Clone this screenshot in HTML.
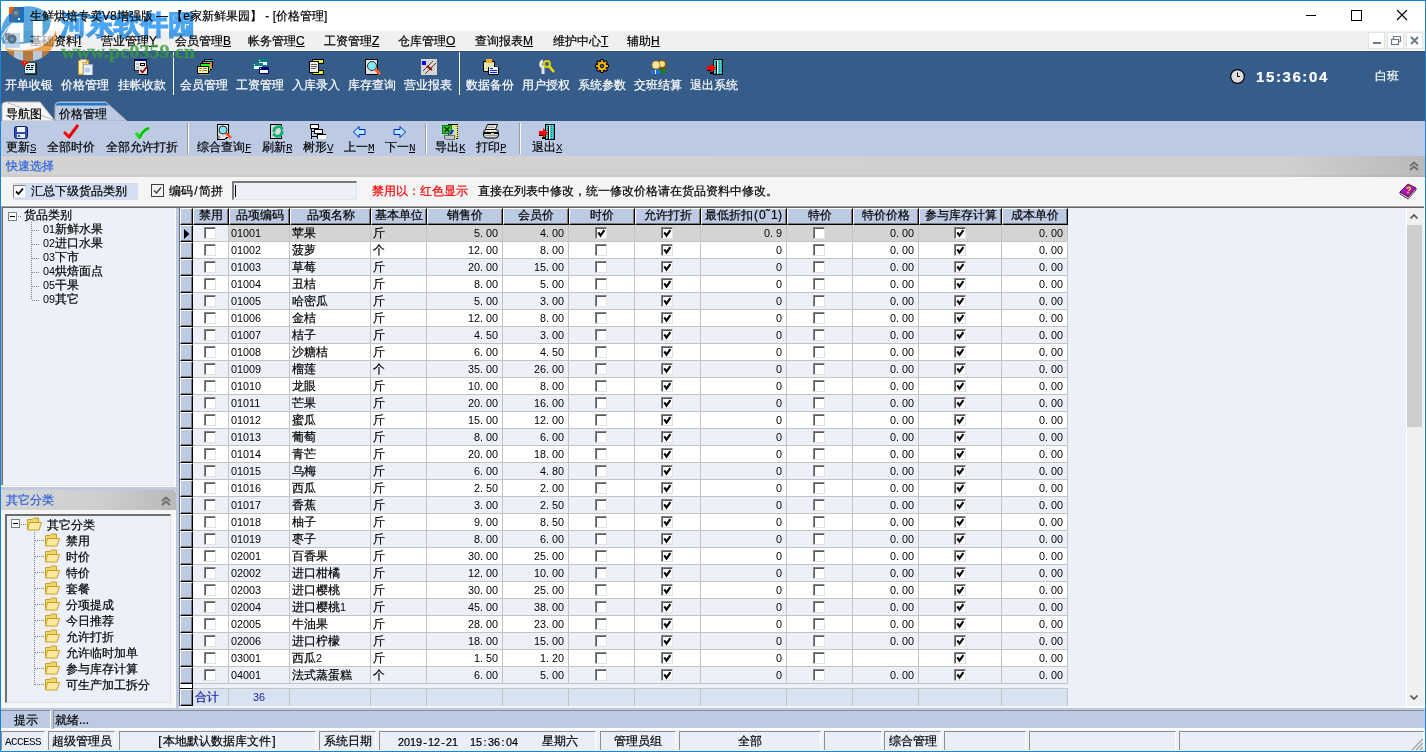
<!DOCTYPE html><html><head><meta charset="utf-8"><style>
*{margin:0;padding:0;box-sizing:border-box}
html,body{width:1426px;height:752px;overflow:hidden;background:#fff}
body{position:relative;font-family:"Liberation Sans",sans-serif;font-size:12px;color:#000}
div{position:absolute}
.t{position:absolute;white-space:nowrap;line-height:12px;font-size:12px}
.m{font-size:10.8px;-webkit-text-stroke:0 !important}
.d{display:inline-block;width:6px;text-align:left}
.t{-webkit-text-stroke:0.2px currentColor}
.u{font-family:"Liberation Mono",monospace;letter-spacing:-0.6px;font-size:11px;-webkit-text-stroke:0}
u{text-decoration:underline;text-underline-offset:1px;text-decoration-thickness:1px}
</style></head><body>
<div style="position:absolute;left:0px;top:0px;width:1426px;height:31px;background:#fff"></div>
<div class="t" style="left:30px;top:10px;">生鲜烘焙专卖V8增强版 — 【e家新鲜果园】 - [价格管理]</div>
<div style="position:absolute;left:1306px;top:15px;width:10px;height:1px;background:#000"></div>
<div style="position:absolute;left:1351px;top:10px;width:11px;height:11px;border:1px solid #000"></div>
<svg style="position:absolute;left:1396px;top:9px" width="12" height="12"><path d="M1 1L11 11M11 1L1 11" stroke="#000" stroke-width="1.1"/></svg>
<div style="position:absolute;left:0px;top:31px;width:1426px;height:19px;background:#f0f0f0"></div>
<div style="position:absolute;left:0px;top:50px;width:1426px;height:1px;background:#fdfdfd"></div>
<div class="t" style="left:30px;top:35px;">基础资料<u>I</u></div>
<div class="t" style="left:101px;top:35px;">营业管理<u>Y</u></div>
<div class="t" style="left:175px;top:35px;">会员管理<u>B</u></div>
<div class="t" style="left:248px;top:35px;">帐务管理<u>C</u></div>
<div class="t" style="left:324px;top:35px;">工资管理<u>Z</u></div>
<div class="t" style="left:398px;top:35px;">仓库管理<u>O</u></div>
<div class="t" style="left:475px;top:35px;">查询报表<u>M</u></div>
<div class="t" style="left:553px;top:35px;">维护中心<u>T</u></div>
<div class="t" style="left:627px;top:35px;">辅助<u>H</u></div>
<div style="position:absolute;left:1368px;top:32px;width:17px;height:17px;background:#fff;border:1px solid #e3e3e3"></div>
<div style="position:absolute;left:1387px;top:32px;width:17px;height:17px;background:#fff;border:1px solid #e3e3e3"></div>
<div style="position:absolute;left:1406px;top:32px;width:17px;height:17px;background:#fff;border:1px solid #e3e3e3"></div>
<div style="position:absolute;left:1373px;top:42px;width:8px;height:2px;background:#6b7b8c"></div>
<svg style="position:absolute;left:1387px;top:32px" width="17" height="17"><rect x="4.5" y="7.5" width="7" height="5" fill="none" stroke="#6b7b8c" stroke-width="1.2"/><path d="M6.5 7.5V4.5H13.5V9.5H11.5" fill="none" stroke="#6b7b8c" stroke-width="1.2"/></svg>
<svg style="position:absolute;left:1406px;top:32px" width="17" height="17"><path d="M5 5L12 12M12 5L5 12" stroke="#6b7b8c" stroke-width="2"/></svg>
<div style="position:absolute;left:0px;top:51px;width:1426px;height:70px;background:#365d8a"></div>
<div style="position:absolute;left:0px;top:51px;width:1426px;height:1px;background:#2a4f7c"></div>
<div class="t" style="left:5px;top:79px;color:#fff">开单收银</div>
<div class="t" style="left:61px;top:79px;color:#fff">价格管理</div>
<div class="t" style="left:118px;top:79px;color:#fff">挂帐收款</div>
<div class="t" style="left:180px;top:79px;color:#fff">会员管理</div>
<div class="t" style="left:236px;top:79px;color:#fff">工资管理</div>
<div class="t" style="left:292px;top:79px;color:#fff">入库录入</div>
<div class="t" style="left:348px;top:79px;color:#fff">库存查询</div>
<div class="t" style="left:404px;top:79px;color:#fff">营业报表</div>
<div class="t" style="left:466px;top:79px;color:#fff">数据备份</div>
<div class="t" style="left:522px;top:79px;color:#fff">用户授权</div>
<div class="t" style="left:578px;top:79px;color:#fff">系统参数</div>
<div class="t" style="left:634px;top:79px;color:#fff">交班结算</div>
<div class="t" style="left:690px;top:79px;color:#fff">退出系统</div>
<div style="position:absolute;left:173px;top:52px;width:1px;height:43px;background:#f4f6f8"></div>
<div style="position:absolute;left:459px;top:52px;width:1px;height:43px;background:#f4f6f8"></div>
<svg style="position:absolute;left:21px;top:59px" width="16" height="16" shape-rendering="crispEdges"><rect x="4" y="4" width="12" height="12" fill="#202020"/><rect x="3" y="3" width="11" height="11" fill="#c8f4f8" stroke="#404040" stroke-width="1"/><rect x="6" y="6" width="3" height="1" fill="#000"/><rect x="10" y="6" width="3" height="1" fill="#000"/><rect x="5" y="8" width="4" height="1" fill="#000"/><rect x="10" y="8" width="2" height="1" fill="#000"/><rect x="5" y="10" width="2" height="1" fill="#000"/><rect x="8" y="10" width="4" height="1" fill="#000"/><rect x="0" y="2" width="7" height="3" fill="#d02010"/><rect x="2" y="0" width="3" height="7" fill="#d02010"/><rect x="3" y="3" width="1" height="1" fill="#ffb0b0"/></svg>
<svg style="position:absolute;left:78px;top:59px" width="16" height="16" shape-rendering="crispEdges"><rect x="0" y="1" width="10" height="14" fill="#f8d070" stroke="#e09010" stroke-width="1"/><rect x="2" y="0" width="6" height="3" fill="#f0f0f0" stroke="#c0a060" stroke-width="1"/><rect x="1" y="2" width="3" height="12" fill="#fff8c0"/><rect x="5" y="5" width="9" height="11" fill="#e8eefa" stroke="#a0a8c8" stroke-width="1"/><rect x="7" y="9" width="5" height="4" fill="#b8d0f0"/></svg>
<svg style="position:absolute;left:134px;top:59px" width="16" height="16" shape-rendering="crispEdges"><rect x="0" y="0" width="13" height="12" fill="#101010"/><rect x="1" y="0" width="12" height="2" fill="#000080"/><rect x="1" y="2" width="11" height="9" fill="#f4f4f4"/><rect x="2" y="4" width="3" height="2" fill="#c0c0c0"/><rect x="6" y="4" width="5" height="3" fill="#000"/><rect x="7" y="5" width="3" height="1" fill="#fff"/><rect x="2" y="7" width="3" height="3" fill="#c0c0c0"/><rect x="5" y="8" width="9" height="8" fill="#000"/><rect x="5" y="7" width="8" height="8" fill="#e0e0e0"/><path d="M6.5 11L8.5 13.5L13.5 7" stroke="#900000" stroke-width="1.6" fill="none" shape-rendering="auto"/></svg>
<svg style="position:absolute;left:197px;top:59px" width="16" height="16" shape-rendering="crispEdges"><rect x="7" y="0" width="9" height="9" fill="#000"/><rect x="8" y="1" width="8" height="1" fill="#00e0f0"/><rect x="5" y="2" width="10" height="9" fill="#000"/><rect x="6" y="3" width="9" height="7" fill="#ff8040"/><rect x="3" y="4" width="10" height="9" fill="#000"/><rect x="4" y="5" width="9" height="7" fill="#20ff20"/><rect x="0" y="7" width="12" height="8" fill="#000"/><rect x="1" y="8" width="10" height="6" fill="#fff8a0"/><rect x="2" y="9" width="3" height="1" fill="#808080"/><rect x="6" y="9" width="4" height="1" fill="#808080"/><rect x="2" y="11" width="2" height="1" fill="#808080"/><rect x="5" y="11" width="5" height="1" fill="#808080"/><rect x="2" y="15" width="11" height="1" fill="#908880"/></svg>
<svg style="position:absolute;left:253px;top:59px" width="16" height="16" shape-rendering="crispEdges"><rect x="5" y="0" width="10" height="7" fill="#008080"/><rect x="6" y="3" width="8" height="3" fill="#fff"/><rect x="6" y="1" width="1" height="1" fill="#fff"/><rect x="0" y="4" width="10" height="7" fill="#008080"/><rect x="1" y="7" width="8" height="3" fill="#fff"/><rect x="1" y="5" width="1" height="1" fill="#fff"/><rect x="6" y="8" width="10" height="7" fill="#000080"/><rect x="7" y="11" width="8" height="3" fill="#fff"/><rect x="7" y="9" width="1" height="1" fill="#fff"/></svg>
<svg style="position:absolute;left:309px;top:59px" width="16" height="16" shape-rendering="crispEdges"><rect x="3" y="0" width="12" height="5" fill="#000"/><rect x="4" y="1" width="10" height="3" fill="#f0f000"/><rect x="6" y="2" width="6" height="1" fill="#fff"/><rect x="3" y="11" width="12" height="5" fill="#000"/><rect x="4" y="12" width="10" height="3" fill="#f0f000"/><rect x="6" y="13" width="6" height="1" fill="#fff"/><rect x="0" y="2" width="10" height="12" fill="#000"/><rect x="1" y="3" width="8" height="10" fill="#f0f0f0"/><rect x="2" y="5" width="6" height="1" fill="#606060"/><rect x="2" y="7" width="6" height="1" fill="#606060"/><rect x="2" y="9" width="5" height="1" fill="#606060"/></svg>
<svg style="position:absolute;left:365px;top:59px" width="16" height="16" shape-rendering="crispEdges"><rect x="0" y="0" width="13" height="16" fill="#000"/><rect x="1" y="1" width="11" height="14" fill="#e0e0e0"/><circle cx="7" cy="7" r="4.5" fill="#80e8ff" stroke="#303030" stroke-width="1" shape-rendering="auto"/><path d="M10 10L15 15" stroke="#ff6020" stroke-width="3" shape-rendering="auto"/></svg>
<svg style="position:absolute;left:421px;top:59px" width="16" height="16" shape-rendering="crispEdges"><rect x="0" y="0" width="16" height="16" fill="#d8d4d0"/><path d="M2 12L12 2M4 15L15 4" stroke="#404040" stroke-width="1" shape-rendering="auto"/><path d="M6 7L11 11" stroke="#900000" stroke-width="2" shape-rendering="auto"/><rect x="1" y="2" width="4" height="4" fill="#0000ff"/></svg>
<svg style="position:absolute;left:483px;top:59px" width="16" height="16" shape-rendering="crispEdges"><rect x="0" y="2" width="12" height="11" fill="#000"/><rect x="1" y="3" width="10" height="9" fill="#e8e4b0"/><rect x="3" y="0" width="6" height="4" fill="#f0b020"/><rect x="5" y="8" width="11" height="8" fill="#000"/><rect x="6" y="8" width="9" height="7" fill="#f4f4f4"/><rect x="7" y="9" width="3" height="1" fill="#0020ff"/><rect x="7" y="11" width="7" height="1" fill="#0020ff"/><rect x="7" y="13" width="7" height="1" fill="#0020ff"/></svg>
<svg style="position:absolute;left:539px;top:59px" width="16" height="16" shape-rendering="crispEdges"><path d="M4 2Q1 3 2 7L4 8V15" stroke="#e8e8e8" stroke-width="3" fill="none" shape-rendering="auto"/><circle cx="8" cy="5" r="3" fill="none" stroke="#e0d000" stroke-width="2" shape-rendering="auto"/><path d="M10 7L15 13" stroke="#f0e000" stroke-width="2.5" shape-rendering="auto"/></svg>
<svg style="position:absolute;left:595px;top:59px" width="16" height="16" shape-rendering="crispEdges"><circle cx="7" cy="7" r="6" fill="#000" shape-rendering="auto"/><path d="M7 0V14M0 7H14M2 2L12 12M12 2L2 12" stroke="#000" stroke-width="3" shape-rendering="auto"/><path d="M7 1V13M1 7H13M2.8 2.8L11.2 11.2M11.2 2.8L2.8 11.2" stroke="#f0a000" stroke-width="1.8" shape-rendering="auto"/><circle cx="7" cy="7" r="4.3" fill="#f8b800" shape-rendering="auto"/><circle cx="7" cy="7" r="1.8" fill="#365d8a" stroke="#000" stroke-width="0.8" shape-rendering="auto"/></svg>
<svg style="position:absolute;left:651px;top:59px" width="16" height="16" shape-rendering="crispEdges"><rect x="7" y="1" width="8" height="10" fill="#805010"/><circle cx="11" cy="5" r="3" fill="#f8e090" shape-rendering="auto"/><rect x="8" y="10" width="7" height="4" fill="#108020"/><circle cx="5" cy="6" r="4" fill="#f8e8a0" stroke="#c09030" stroke-width="1" shape-rendering="auto"/><rect x="0" y="11" width="9" height="4" fill="#2070e0"/><rect x="4" y="11" width="1" height="4" fill="#fff"/></svg>
<svg style="position:absolute;left:707px;top:59px" width="16" height="16" shape-rendering="crispEdges"><rect x="6" y="0" width="10" height="16" fill="#000"/><rect x="7" y="1" width="8" height="14" fill="#40d0d0"/><path d="M8 2V15M10 2V15M12 2V15M14 2V15" stroke="#208080" stroke-width="1" stroke-dasharray="1 1"/><rect x="10" y="2" width="1" height="13" fill="#fff"/><rect x="9" y="2" width="1" height="13" fill="#000"/><rect x="0" y="7" width="5" height="4" fill="#ff0000"/><path d="M4 4L9 9L4 14Z" fill="#ff0000" shape-rendering="auto"/><rect x="0" y="11" width="4" height="1" fill="#000"/><rect x="3" y="13" width="3" height="2" fill="#000"/></svg>
<svg style="position:absolute;left:1230px;top:69px" width="15" height="15"><circle cx="7.5" cy="7.5" r="6.8" fill="#dedede" stroke="#000" stroke-width="1.2"/><path d="M7.5 3.5V7.5H10" stroke="#000" stroke-width="1" fill="none"/></svg>
<div class="t" style="left:1256px;top:71px;color:#fff;font-weight:bold;font-size:15px;letter-spacing:1.6px;line-height:12px">15:36:04</div>
<div class="t" style="left:1375px;top:70px;color:#fff">白班</div>
<svg style="position:absolute;left:0;top:100px" width="140" height="22"><path d="M2 21V5Q2 2 6 2H40L55 21Z" fill="#f6f6f6" stroke="#b8b8b8" stroke-width="1"/><path d="M8 3L54 20" stroke="#9a9a9a" stroke-width="0.7"/><path d="M55 21V6Q55 2 60 2H106L127 21Z" fill="#bccbe3" stroke="#a0a8b8" stroke-width="1"/><path d="M56 5Q56 3 60 3H106L109 5.5H56Z" fill="#1a78d0"/></svg>
<div class="t" style="left:6px;top:108px;">导航图</div>
<div class="t" style="left:59px;top:108px;">价格管理</div>
<div style="position:absolute;left:0px;top:121px;width:1426px;height:35px;background:#bccbe3"></div>
<div class="t" style="left:6px;top:141px;">更新<u class=u>S</u></div>
<div class="t" style="left:47px;top:141px;">全部时价</div>
<div class="t" style="left:106px;top:141px;">全部允许打折</div>
<div class="t" style="left:197px;top:141px;">综合查询<u class=u>F</u></div>
<div class="t" style="left:262px;top:141px;">刷新<u class=u>R</u></div>
<div class="t" style="left:303px;top:141px;">树形<u class=u>V</u></div>
<div class="t" style="left:344px;top:141px;">上一<u class=u>M</u></div>
<div class="t" style="left:385px;top:141px;">下一<u class=u>N</u></div>
<div class="t" style="left:435px;top:141px;">导出<u class=u>K</u></div>
<div class="t" style="left:476px;top:141px;">打印<u class=u>P</u></div>
<div class="t" style="left:532px;top:141px;">退出<u class=u>X</u></div>
<svg style="position:absolute;left:14px;top:126px" width="16" height="16" shape-rendering="crispEdges"><rect x="0.5" y="0.5" width="13" height="12" rx="2" fill="#3050b0" stroke="#102070" stroke-width="1" shape-rendering="auto"/><rect x="3" y="1" width="8" height="5" fill="#f4f8ff"/><rect x="3" y="8" width="8" height="4" fill="#e8f0ff"/><rect x="4" y="9" width="2" height="2" fill="#3050b0"/></svg>
<svg style="position:absolute;left:63px;top:124px" width="16" height="16" shape-rendering="crispEdges"><path d="M1 8L6 13L15 1" stroke="#ff0000" stroke-width="3" fill="none" stroke-linejoin="round" shape-rendering="auto"/><path d="M6 13L15 1" stroke="#c00000" stroke-width="1" fill="none" shape-rendering="auto"/></svg>
<svg style="position:absolute;left:135px;top:127px" width="16" height="16" shape-rendering="crispEdges"><path d="M1 6L4.5 10.5Q8 3 14 1" stroke="#10e010" stroke-width="3" fill="none" stroke-linejoin="round" shape-rendering="auto"/><path d="M4.5 10.5Q8 3 14 1" stroke="#008000" stroke-width="0.8" fill="none" shape-rendering="auto"/></svg>
<svg style="position:absolute;left:216px;top:124px" width="16" height="16" shape-rendering="crispEdges"><path d="M1 0H12V13L9 15H1Z" fill="#e0e0e0" stroke="#000" stroke-width="1"/><circle cx="7" cy="6" r="4" fill="#80e8ff" stroke="#303030" stroke-width="1" shape-rendering="auto"/><path d="M10 9L15 14" stroke="#ff5020" stroke-width="2.5" shape-rendering="auto"/><circle cx="2.5" cy="13" r="1" fill="#fff" stroke="#000" stroke-width="0.6" shape-rendering="auto"/></svg>
<svg style="position:absolute;left:270px;top:124px" width="16" height="16" shape-rendering="crispEdges"><rect x="0" y="0" width="12" height="15" fill="#000"/><rect x="1" y="1" width="10" height="13" fill="#d8d8d8"/><path d="M4 8A4.5 4.5 0 0 1 12 4.5" stroke="#10b070" stroke-width="2.8" fill="none" shape-rendering="auto"/><path d="M12 7A4.5 4.5 0 0 1 4 10.5" stroke="#10b070" stroke-width="2.8" fill="none" shape-rendering="auto"/><path d="M10 2L14 4L11 7Z" fill="#10b070" shape-rendering="auto"/><path d="M6 13L2 11L5 8Z" fill="#10b070" shape-rendering="auto"/></svg>
<svg style="position:absolute;left:310px;top:124px" width="16" height="16" shape-rendering="crispEdges"><rect x="0" y="0" width="9" height="5" fill="#000"/><rect x="1" y="1" width="7" height="3" fill="#fff"/><rect x="4" y="5" width="9" height="5" fill="#000"/><rect x="5" y="6" width="7" height="3" fill="#fff"/><rect x="7" y="10" width="9" height="5" fill="#000"/><rect x="8" y="11" width="8" height="4" fill="#fff"/><rect x="1" y="5" width="1" height="10" fill="#000"/><rect x="1" y="7" width="3" height="1" fill="#000"/><rect x="1" y="12" width="6" height="1" fill="#000"/></svg>
<svg style="position:absolute;left:353px;top:125px" width="16" height="16" shape-rendering="crispEdges"><path d="M0.5 7L6 1.5V4.5H12V9.5H6V12.5Z" fill="#b8e8ff" stroke="#0020d0" stroke-width="1" shape-rendering="auto"/></svg>
<svg style="position:absolute;left:393px;top:125px" width="16" height="16" shape-rendering="crispEdges"><path d="M12.5 7L7 1.5V4.5H1V9.5H7V12.5Z" fill="#b8e8ff" stroke="#0020d0" stroke-width="1" shape-rendering="auto"/></svg>
<svg style="position:absolute;left:442px;top:124px" width="16" height="16" shape-rendering="crispEdges"><rect x="6" y="0" width="10" height="15" fill="#000"/><rect x="7" y="1" width="8" height="13" fill="#d8e0a0"/><path d="M7 1H15V14H7" fill="none" stroke="#f0f000" stroke-width="1" stroke-dasharray="1 1"/><path d="M2 11H12V15H4Q2 15 2 13Z" fill="#c0c8c8" stroke="#707070" stroke-width="1"/><rect x="0" y="1" width="10" height="9" fill="#008000"/><rect x="1" y="2" width="8" height="7" fill="#40c040"/><path d="M2.5 3L7.5 8M7.5 3L2.5 8" stroke="#004000" stroke-width="1.6" shape-rendering="auto"/><path d="M8 10Q10 9 11 6" stroke="#0030ff" stroke-width="2.2" fill="none" shape-rendering="auto"/></svg>
<svg style="position:absolute;left:483px;top:124px" width="16" height="16" shape-rendering="crispEdges"><path d="M4.5 0.5H14.5L12.5 5.5H2.5Z" fill="#fff" stroke="#000" stroke-width="1" shape-rendering="auto"/><path d="M5 2H12M4.5 3.5H11.5" stroke="#909090" stroke-width="0.8" shape-rendering="auto"/><rect x="0.5" y="5.5" width="15" height="8.5" rx="3" fill="#d8d8d8" stroke="#000" stroke-width="1" shape-rendering="auto"/><rect x="1" y="8" width="14" height="2" fill="#000"/><rect x="8" y="9" width="3" height="1" fill="#f0e000"/><rect x="2" y="11" width="12" height="1" fill="#a0a0a0"/><rect x="3" y="6" width="10" height="1" fill="#fff"/></svg>
<svg style="position:absolute;left:539px;top:124px" width="16" height="16" shape-rendering="crispEdges"><rect x="6" y="0" width="10" height="16" fill="#000"/><rect x="7" y="1" width="8" height="14" fill="#40d0d0"/><path d="M8 2V15M10 2V15M12 2V15M14 2V15" stroke="#208080" stroke-width="1" stroke-dasharray="1 1"/><rect x="10" y="2" width="1" height="13" fill="#fff"/><rect x="9" y="2" width="1" height="13" fill="#000"/><rect x="0" y="7" width="5" height="4" fill="#ff0000"/><path d="M4 4L9 9L4 14Z" fill="#ff0000" shape-rendering="auto"/><rect x="0" y="11" width="4" height="1" fill="#000"/><rect x="3" y="13" width="3" height="2" fill="#000"/></svg>
<div style="position:absolute;left:187px;top:123px;width:1px;height:31px;background:#9c9c9c"></div>
<div style="position:absolute;left:188px;top:123px;width:1px;height:31px;background:#fafafa"></div>
<div style="position:absolute;left:425px;top:123px;width:1px;height:31px;background:#9c9c9c"></div>
<div style="position:absolute;left:426px;top:123px;width:1px;height:31px;background:#fafafa"></div>
<div style="position:absolute;left:519px;top:123px;width:1px;height:31px;background:#9c9c9c"></div>
<div style="position:absolute;left:520px;top:123px;width:1px;height:31px;background:#fafafa"></div>
<div style="position:absolute;left:0px;top:156px;width:1426px;height:21px;background:linear-gradient(90deg,#d3d3d3 0%,#d0d0d0 90%,#b9b9b9 100%)"></div>
<div style="position:absolute;left:0px;top:175px;width:1426px;height:2px;background:rgba(0,0,0,0.03)"></div>
<div class="t" style="left:6px;top:160px;color:#2d62dc">快速选择</div>
<svg style="position:absolute;left:1408px;top:160px" width="12" height="12"><path d="M2 6L6 2.5L10 6M2 10L6 6.5L10 10" stroke="#6e6e6e" stroke-width="1.8" fill="none"/></svg>
<div style="position:absolute;left:0px;top:177px;width:1426px;height:29px;background:#f5f5f5"></div>
<div style="position:absolute;left:13px;top:183px;width:125px;height:17px;background:#d3def2"></div>
<div style="position:absolute;left:13px;top:185px;width:13px;height:13px;background:#fff;border-top:1px solid #808080;border-left:1px solid #808080;border-right:1px solid #e0e0e0;border-bottom:1px solid #e0e0e0"></div>
<svg style="position:absolute;left:13px;top:185px" width="13" height="13"><path d="M3 6.5L5.5 9L10 3.5" stroke="#000" stroke-width="1.8" fill="none"/></svg>
<div class="t" style="left:31px;top:185px;">汇总下级货品类别</div>
<div style="position:absolute;left:151px;top:184px;width:13px;height:13px;background:#f5f5f5;border:1px solid #404040"></div>
<svg style="position:absolute;left:151px;top:184px" width="13" height="13"><path d="M3 6.5L5.5 9L10 3.5" stroke="#404040" stroke-width="1.4" fill="none"/></svg>
<div class="t" style="left:169px;top:185px;">编码<span class="d" style="text-align:center">/</span>简拼</div>
<div style="position:absolute;left:232px;top:181px;width:125px;height:19px;background:#ecf0f8;border-top:2px solid #7a7a7a;border-left:2px solid #7a7a7a;border-right:1px solid #e6e6e6;border-bottom:1px solid #e6e6e6"></div>
<div style="position:absolute;left:235px;top:185px;width:1px;height:12px;background:#000"></div>
<div class="t" style="left:372px;top:185px;color:#f00">禁用以：红色显示</div>
<div class="t" style="left:478px;top:185px;">直接在列表中修改，统一修改价格请在货品资料中修改。</div>
<svg style="position:absolute;left:1399px;top:182px" width="18" height="18"><path d="M1 10L9 2L17 6L9 15Z" fill="#b010c0" stroke="#300030" stroke-width="0.8"/><path d="M1 10L1 12L9 17L17 8L17 6L9 15Z" fill="#e8e8e8" stroke="#300030" stroke-width="0.8"/><path d="M7.5 6.5Q9 4.5 11 5.5Q12 7 9.5 8.5" stroke="#f0e000" stroke-width="1.5" fill="none"/><circle cx="9" cy="10.5" r="0.9" fill="#f0e000"/></svg>
<div style="position:absolute;left:0px;top:205px;width:1426px;height:1px;background:#fff"></div>
<div style="position:absolute;left:0px;top:208px;width:176px;height:500px;background:#f5f5f5"></div>
<div style="position:absolute;left:2px;top:208px;width:172px;height:279px;background:#ecf0f8;border-left:1px solid #6f6f6f"></div>
<div style="position:absolute;left:1px;top:206px;width:1px;height:279px;background:#a0a0a0"></div>
<div style="position:absolute;left:2px;top:485px;width:172px;height:1px;background:#e3e3e3"></div>
<div style="position:absolute;left:1px;top:486px;width:175px;height:1px;background:#fff"></div>
<div style="position:absolute;left:174px;top:206px;width:2px;height:502px;background:#fafafa"></div>
<div style="position:absolute;left:8px;top:212px;width:9px;height:9px;background:#fff;border:1px solid #808080"></div>
<div style="position:absolute;left:10px;top:216px;width:5px;height:1px;background:#000"></div>
<div class="t" style="left:24px;top:209px;">货品类别</div>
<div style="left:18px;top:216px;width:4px;height:1px;background:repeating-linear-gradient(90deg,#808080 0 1px,transparent 1px 2px)"></div>
<div style="left:31px;top:222px;width:1px;height:78px;background:repeating-linear-gradient(180deg,#808080 0 1px,transparent 1px 2px)"></div>
<div style="left:32px;top:230px;width:8px;height:1px;background:repeating-linear-gradient(90deg,#808080 0 1px,transparent 1px 2px)"></div>
<div class="t" style="left:43px;top:223px;"><span class="m">01</span>新鲜水果</div>
<div style="left:32px;top:244px;width:8px;height:1px;background:repeating-linear-gradient(90deg,#808080 0 1px,transparent 1px 2px)"></div>
<div class="t" style="left:43px;top:237px;"><span class="m">02</span>进口水果</div>
<div style="left:32px;top:258px;width:8px;height:1px;background:repeating-linear-gradient(90deg,#808080 0 1px,transparent 1px 2px)"></div>
<div class="t" style="left:43px;top:251px;"><span class="m">03</span>下市</div>
<div style="left:32px;top:272px;width:8px;height:1px;background:repeating-linear-gradient(90deg,#808080 0 1px,transparent 1px 2px)"></div>
<div class="t" style="left:43px;top:265px;"><span class="m">04</span>烘焙面点</div>
<div style="left:32px;top:286px;width:8px;height:1px;background:repeating-linear-gradient(90deg,#808080 0 1px,transparent 1px 2px)"></div>
<div class="t" style="left:43px;top:279px;"><span class="m">05</span>干果</div>
<div style="left:32px;top:300px;width:8px;height:1px;background:repeating-linear-gradient(90deg,#808080 0 1px,transparent 1px 2px)"></div>
<div class="t" style="left:43px;top:293px;"><span class="m">09</span>其它</div>
<div style="position:absolute;left:0px;top:487px;width:176px;height:3px;background:#bccbe3"></div>
<div style="position:absolute;left:1px;top:490px;width:175px;height:20px;background:linear-gradient(90deg,#d5d5d5 0%,#cfcfcf 55%,#b9b9b9 100%);border-radius:3px 3px 0 0"></div>
<div class="t" style="left:6px;top:494px;color:#2d62dc">其它分类</div>
<svg style="position:absolute;left:160px;top:495px" width="12" height="12"><path d="M2 6L6 2.5L10 6M2 10L6 6.5L10 10" stroke="#6e6e6e" stroke-width="1.8" fill="none"/></svg>
<div style="position:absolute;left:5px;top:514px;width:166px;height:189px;background:#ecf0f8;border-top:2px solid #6f6f6f;border-left:2px solid #6f6f6f;border-right:1px solid #e0e0e0;border-bottom:1px solid #e0e0e0"></div>
<div style="position:absolute;left:11px;top:519px;width:9px;height:9px;background:#fff;border:1px solid #808080"></div>
<div style="position:absolute;left:13px;top:523px;width:5px;height:1px;background:#000"></div>
<svg style="position:absolute;left:26px;top:516px" width="17" height="16"><path d="M1.5 3.5H6L7.5 2H12.5V13.5H1.5Z" fill="#f2d46a" stroke="#c9a020" stroke-width="1"/><path d="M3.5 6.5H15.5L13 14H1.5Z" fill="#fbeaa0" stroke="#c9a020" stroke-width="1"/></svg>
<div class="t" style="left:47px;top:519px;">其它分类</div>
<div style="left:21px;top:524px;width:5px;height:1px;background:repeating-linear-gradient(90deg,#808080 0 1px,transparent 1px 2px)"></div>
<div style="left:34px;top:532px;width:1px;height:153px;background:repeating-linear-gradient(180deg,#808080 0 1px,transparent 1px 2px)"></div>
<div style="left:35px;top:540px;width:9px;height:1px;background:repeating-linear-gradient(90deg,#808080 0 1px,transparent 1px 2px)"></div>
<svg style="position:absolute;left:44px;top:532px" width="17" height="16"><path d="M1.5 3.5H6L7.5 2H12.5V13.5H1.5Z" fill="#f2d46a" stroke="#c9a020" stroke-width="1"/><path d="M3.5 6.5H15.5L13 14H1.5Z" fill="#fbeaa0" stroke="#c9a020" stroke-width="1"/></svg>
<div class="t" style="left:66px;top:535px;">禁用</div>
<div style="left:35px;top:556px;width:9px;height:1px;background:repeating-linear-gradient(90deg,#808080 0 1px,transparent 1px 2px)"></div>
<svg style="position:absolute;left:44px;top:548px" width="17" height="16"><path d="M1.5 3.5H6L7.5 2H12.5V13.5H1.5Z" fill="#f2d46a" stroke="#c9a020" stroke-width="1"/><path d="M3.5 6.5H15.5L13 14H1.5Z" fill="#fbeaa0" stroke="#c9a020" stroke-width="1"/></svg>
<div class="t" style="left:66px;top:551px;">时价</div>
<div style="left:35px;top:572px;width:9px;height:1px;background:repeating-linear-gradient(90deg,#808080 0 1px,transparent 1px 2px)"></div>
<svg style="position:absolute;left:44px;top:564px" width="17" height="16"><path d="M1.5 3.5H6L7.5 2H12.5V13.5H1.5Z" fill="#f2d46a" stroke="#c9a020" stroke-width="1"/><path d="M3.5 6.5H15.5L13 14H1.5Z" fill="#fbeaa0" stroke="#c9a020" stroke-width="1"/></svg>
<div class="t" style="left:66px;top:567px;">特价</div>
<div style="left:35px;top:588px;width:9px;height:1px;background:repeating-linear-gradient(90deg,#808080 0 1px,transparent 1px 2px)"></div>
<svg style="position:absolute;left:44px;top:580px" width="17" height="16"><path d="M1.5 3.5H6L7.5 2H12.5V13.5H1.5Z" fill="#f2d46a" stroke="#c9a020" stroke-width="1"/><path d="M3.5 6.5H15.5L13 14H1.5Z" fill="#fbeaa0" stroke="#c9a020" stroke-width="1"/></svg>
<div class="t" style="left:66px;top:583px;">套餐</div>
<div style="left:35px;top:604px;width:9px;height:1px;background:repeating-linear-gradient(90deg,#808080 0 1px,transparent 1px 2px)"></div>
<svg style="position:absolute;left:44px;top:596px" width="17" height="16"><path d="M1.5 3.5H6L7.5 2H12.5V13.5H1.5Z" fill="#f2d46a" stroke="#c9a020" stroke-width="1"/><path d="M3.5 6.5H15.5L13 14H1.5Z" fill="#fbeaa0" stroke="#c9a020" stroke-width="1"/></svg>
<div class="t" style="left:66px;top:599px;">分项提成</div>
<div style="left:35px;top:620px;width:9px;height:1px;background:repeating-linear-gradient(90deg,#808080 0 1px,transparent 1px 2px)"></div>
<svg style="position:absolute;left:44px;top:612px" width="17" height="16"><path d="M1.5 3.5H6L7.5 2H12.5V13.5H1.5Z" fill="#f2d46a" stroke="#c9a020" stroke-width="1"/><path d="M3.5 6.5H15.5L13 14H1.5Z" fill="#fbeaa0" stroke="#c9a020" stroke-width="1"/></svg>
<div class="t" style="left:66px;top:615px;">今日推荐</div>
<div style="left:35px;top:636px;width:9px;height:1px;background:repeating-linear-gradient(90deg,#808080 0 1px,transparent 1px 2px)"></div>
<svg style="position:absolute;left:44px;top:628px" width="17" height="16"><path d="M1.5 3.5H6L7.5 2H12.5V13.5H1.5Z" fill="#f2d46a" stroke="#c9a020" stroke-width="1"/><path d="M3.5 6.5H15.5L13 14H1.5Z" fill="#fbeaa0" stroke="#c9a020" stroke-width="1"/></svg>
<div class="t" style="left:66px;top:631px;">允许打折</div>
<div style="left:35px;top:652px;width:9px;height:1px;background:repeating-linear-gradient(90deg,#808080 0 1px,transparent 1px 2px)"></div>
<svg style="position:absolute;left:44px;top:644px" width="17" height="16"><path d="M1.5 3.5H6L7.5 2H12.5V13.5H1.5Z" fill="#f2d46a" stroke="#c9a020" stroke-width="1"/><path d="M3.5 6.5H15.5L13 14H1.5Z" fill="#fbeaa0" stroke="#c9a020" stroke-width="1"/></svg>
<div class="t" style="left:66px;top:647px;">允许临时加单</div>
<div style="left:35px;top:668px;width:9px;height:1px;background:repeating-linear-gradient(90deg,#808080 0 1px,transparent 1px 2px)"></div>
<svg style="position:absolute;left:44px;top:660px" width="17" height="16"><path d="M1.5 3.5H6L7.5 2H12.5V13.5H1.5Z" fill="#f2d46a" stroke="#c9a020" stroke-width="1"/><path d="M3.5 6.5H15.5L13 14H1.5Z" fill="#fbeaa0" stroke="#c9a020" stroke-width="1"/></svg>
<div class="t" style="left:66px;top:663px;">参与库存计算</div>
<div style="left:35px;top:684px;width:9px;height:1px;background:repeating-linear-gradient(90deg,#808080 0 1px,transparent 1px 2px)"></div>
<svg style="position:absolute;left:44px;top:676px" width="17" height="16"><path d="M1.5 3.5H6L7.5 2H12.5V13.5H1.5Z" fill="#f2d46a" stroke="#c9a020" stroke-width="1"/><path d="M3.5 6.5H15.5L13 14H1.5Z" fill="#fbeaa0" stroke="#c9a020" stroke-width="1"/></svg>
<div class="t" style="left:66px;top:679px;">可生产加工拆分</div>
<div style="position:absolute;left:176px;top:206px;width:3px;height:502px;background:#bccbe3"></div>
<div style="position:absolute;left:179px;top:206px;width:1228px;height:500px;background:#ecf0f8"></div>
<div style="position:absolute;left:179px;top:206px;width:1px;height:500px;background:#6f6f6f"></div>
<div style="position:absolute;left:180px;top:208px;width:13px;height:17px;background:#bccbe3;border-top:1px solid #fff;border-left:1px solid #fff;border-right:1px solid #000;border-bottom:1px solid #000;box-shadow:inset -1px -1px 0 #7a7a7a"></div>
<div style="position:absolute;left:193px;top:208px;width:36px;height:17px;background:#bccbe3;border-top:1px solid #fff;border-left:1px solid #fff;border-right:1px solid #000;border-bottom:1px solid #000;box-shadow:inset -1px -1px 0 #7a7a7a"></div>
<div class="t" style="left:193px;top:209px;width:36px;text-align:center">禁用</div>
<div style="position:absolute;left:229px;top:208px;width:61px;height:17px;background:#bccbe3;border-top:1px solid #fff;border-left:1px solid #fff;border-right:1px solid #000;border-bottom:1px solid #000;box-shadow:inset -1px -1px 0 #7a7a7a"></div>
<div class="t" style="left:229px;top:209px;width:61px;text-align:center">品项编码</div>
<div style="position:absolute;left:290px;top:208px;width:81px;height:17px;background:#bccbe3;border-top:1px solid #fff;border-left:1px solid #fff;border-right:1px solid #000;border-bottom:1px solid #000;box-shadow:inset -1px -1px 0 #7a7a7a"></div>
<div class="t" style="left:290px;top:209px;width:81px;text-align:center">品项名称</div>
<div style="position:absolute;left:371px;top:208px;width:56px;height:17px;background:#bccbe3;border-top:1px solid #fff;border-left:1px solid #fff;border-right:1px solid #000;border-bottom:1px solid #000;box-shadow:inset -1px -1px 0 #7a7a7a"></div>
<div class="t" style="left:371px;top:209px;width:56px;text-align:center">基本单位</div>
<div style="position:absolute;left:427px;top:208px;width:76px;height:17px;background:#bccbe3;border-top:1px solid #fff;border-left:1px solid #fff;border-right:1px solid #000;border-bottom:1px solid #000;box-shadow:inset -1px -1px 0 #7a7a7a"></div>
<div class="t" style="left:427px;top:209px;width:76px;text-align:center">销售价</div>
<div style="position:absolute;left:503px;top:208px;width:66px;height:17px;background:#bccbe3;border-top:1px solid #fff;border-left:1px solid #fff;border-right:1px solid #000;border-bottom:1px solid #000;box-shadow:inset -1px -1px 0 #7a7a7a"></div>
<div class="t" style="left:503px;top:209px;width:66px;text-align:center">会员价</div>
<div style="position:absolute;left:569px;top:208px;width:66px;height:17px;background:#bccbe3;border-top:1px solid #fff;border-left:1px solid #fff;border-right:1px solid #000;border-bottom:1px solid #000;box-shadow:inset -1px -1px 0 #7a7a7a"></div>
<div class="t" style="left:569px;top:209px;width:66px;text-align:center">时价</div>
<div style="position:absolute;left:635px;top:208px;width:66px;height:17px;background:#bccbe3;border-top:1px solid #fff;border-left:1px solid #fff;border-right:1px solid #000;border-bottom:1px solid #000;box-shadow:inset -1px -1px 0 #7a7a7a"></div>
<div class="t" style="left:635px;top:209px;width:66px;text-align:center">允许打折</div>
<div style="position:absolute;left:701px;top:208px;width:86px;height:17px;background:#bccbe3;border-top:1px solid #fff;border-left:1px solid #fff;border-right:1px solid #000;border-bottom:1px solid #000;box-shadow:inset -1px -1px 0 #7a7a7a"></div>
<div class="t" style="left:701px;top:209px;width:86px;text-align:center">最低折扣<span class="d" style="text-align:center">(</span><span class="d" style="text-align:center">0</span><span class="d" style="text-align:center">˜</span><span class="d" style="text-align:center">1</span><span class="d" style="text-align:center">)</span></div>
<div style="position:absolute;left:787px;top:208px;width:66px;height:17px;background:#bccbe3;border-top:1px solid #fff;border-left:1px solid #fff;border-right:1px solid #000;border-bottom:1px solid #000;box-shadow:inset -1px -1px 0 #7a7a7a"></div>
<div class="t" style="left:787px;top:209px;width:66px;text-align:center">特价</div>
<div style="position:absolute;left:853px;top:208px;width:66px;height:17px;background:#bccbe3;border-top:1px solid #fff;border-left:1px solid #fff;border-right:1px solid #000;border-bottom:1px solid #000;box-shadow:inset -1px -1px 0 #7a7a7a"></div>
<div class="t" style="left:853px;top:209px;width:66px;text-align:center">特价价格</div>
<div style="position:absolute;left:919px;top:208px;width:83px;height:17px;background:#bccbe3;border-top:1px solid #fff;border-left:1px solid #fff;border-right:1px solid #000;border-bottom:1px solid #000;box-shadow:inset -1px -1px 0 #7a7a7a"></div>
<div class="t" style="left:919px;top:209px;width:83px;text-align:center">参与库存计算</div>
<div style="position:absolute;left:1002px;top:208px;width:66px;height:17px;background:#bccbe3;border-top:1px solid #fff;border-left:1px solid #fff;border-right:1px solid #000;border-bottom:1px solid #000;box-shadow:inset -1px -1px 0 #7a7a7a"></div>
<div class="t" style="left:1002px;top:209px;width:66px;text-align:center">成本单价</div>
<div style="position:absolute;left:180px;top:225px;width:13px;height:17px;background:#bccbe3;border-top:1px solid #fff;border-left:1px solid #fff;border-right:1px solid #000;border-bottom:1px solid #000;box-shadow:inset -1px -1px 0 #7a7a7a"></div>
<div style="position:absolute;left:193px;top:225px;width:875px;height:17px;background:#d4d4d4"></div>
<div style="position:absolute;left:193px;top:225px;width:35px;height:16px;background:#ecf0f8"></div>
<div style="position:absolute;left:193px;top:241px;width:875px;height:1px;background:#c3c3c3"></div>
<div style="left:204px;top:227px;width:12px;height:12px;background:#fff;border-top:1px solid #858585;border-left:1px solid #858585;border-right:1px solid #e3e3e3;border-bottom:1px solid #e3e3e3;box-shadow:inset 1px 1px 0 #5a5a5a"></div>
<div class="t m" style="left:231px;top:227px">01001</div>
<div class="t" style="left:292px;top:227px;">苹果</div>
<div class="t" style="left:373px;top:227px;">斤</div>
<div class="t m" style="left:426px;top:227px;width:72px;text-align:right">5<span class="d">.</span>00</div>
<div class="t m" style="left:502px;top:227px;width:62px;text-align:right">4<span class="d">.</span>00</div>
<div style="left:595px;top:227px;width:12px;height:12px;background:#fff;border-top:1px solid #858585;border-left:1px solid #858585;border-right:1px solid #e3e3e3;border-bottom:1px solid #e3e3e3;box-shadow:inset 1px 1px 0 #5a5a5a"></div><svg style="position:absolute;left:595px;top:227px" width="12" height="12"><path d="M3.3 5.3L5.5 8.6L9.4 3.2" stroke="#000" stroke-width="2.1" fill="none"/></svg>
<div style="left:661px;top:227px;width:12px;height:12px;background:#fff;border-top:1px solid #858585;border-left:1px solid #858585;border-right:1px solid #e3e3e3;border-bottom:1px solid #e3e3e3;box-shadow:inset 1px 1px 0 #5a5a5a"></div><svg style="position:absolute;left:661px;top:227px" width="12" height="12"><path d="M3.3 5.3L5.5 8.6L9.4 3.2" stroke="#000" stroke-width="2.1" fill="none"/></svg>
<div class="t m" style="left:700px;top:227px;width:82px;text-align:right">0<span class="d">.</span>9</div>
<div style="left:813px;top:227px;width:12px;height:12px;background:#fff;border-top:1px solid #858585;border-left:1px solid #858585;border-right:1px solid #e3e3e3;border-bottom:1px solid #e3e3e3;box-shadow:inset 1px 1px 0 #5a5a5a"></div>
<div class="t m" style="left:852px;top:227px;width:62px;text-align:right">0<span class="d">.</span>00</div>
<div style="left:954px;top:227px;width:12px;height:12px;background:#fff;border-top:1px solid #858585;border-left:1px solid #858585;border-right:1px solid #e3e3e3;border-bottom:1px solid #e3e3e3;box-shadow:inset 1px 1px 0 #5a5a5a"></div><svg style="position:absolute;left:954px;top:227px" width="12" height="12"><path d="M3.3 5.3L5.5 8.6L9.4 3.2" stroke="#000" stroke-width="2.1" fill="none"/></svg>
<div class="t m" style="left:1001px;top:227px;width:62px;text-align:right">0<span class="d">.</span>00</div>
<svg style="position:absolute;left:183px;top:228px" width="8" height="12"><path d="M1 1L6.5 6L1 11Z" fill="#000"/></svg>
<div style="position:absolute;left:180px;top:242px;width:13px;height:17px;background:#bccbe3;border-top:1px solid #fff;border-left:1px solid #fff;border-right:1px solid #000;border-bottom:1px solid #000;box-shadow:inset -1px -1px 0 #7a7a7a"></div>
<div style="position:absolute;left:193px;top:242px;width:875px;height:17px;background:#ffffff"></div>
<div style="position:absolute;left:193px;top:258px;width:875px;height:1px;background:#c3c3c3"></div>
<div style="left:204px;top:244px;width:12px;height:12px;background:#fff;border-top:1px solid #858585;border-left:1px solid #858585;border-right:1px solid #e3e3e3;border-bottom:1px solid #e3e3e3;box-shadow:inset 1px 1px 0 #5a5a5a"></div>
<div class="t m" style="left:231px;top:244px">01002</div>
<div class="t" style="left:292px;top:244px;">菠萝</div>
<div class="t" style="left:373px;top:244px;">个</div>
<div class="t m" style="left:426px;top:244px;width:72px;text-align:right">12<span class="d">.</span>00</div>
<div class="t m" style="left:502px;top:244px;width:62px;text-align:right">8<span class="d">.</span>00</div>
<div style="left:595px;top:244px;width:12px;height:12px;background:#fff;border-top:1px solid #858585;border-left:1px solid #858585;border-right:1px solid #e3e3e3;border-bottom:1px solid #e3e3e3;box-shadow:inset 1px 1px 0 #5a5a5a"></div>
<div style="left:661px;top:244px;width:12px;height:12px;background:#fff;border-top:1px solid #858585;border-left:1px solid #858585;border-right:1px solid #e3e3e3;border-bottom:1px solid #e3e3e3;box-shadow:inset 1px 1px 0 #5a5a5a"></div><svg style="position:absolute;left:661px;top:244px" width="12" height="12"><path d="M3.3 5.3L5.5 8.6L9.4 3.2" stroke="#000" stroke-width="2.1" fill="none"/></svg>
<div class="t m" style="left:700px;top:244px;width:82px;text-align:right">0</div>
<div style="left:813px;top:244px;width:12px;height:12px;background:#fff;border-top:1px solid #858585;border-left:1px solid #858585;border-right:1px solid #e3e3e3;border-bottom:1px solid #e3e3e3;box-shadow:inset 1px 1px 0 #5a5a5a"></div>
<div class="t m" style="left:852px;top:244px;width:62px;text-align:right">0<span class="d">.</span>00</div>
<div style="left:954px;top:244px;width:12px;height:12px;background:#fff;border-top:1px solid #858585;border-left:1px solid #858585;border-right:1px solid #e3e3e3;border-bottom:1px solid #e3e3e3;box-shadow:inset 1px 1px 0 #5a5a5a"></div><svg style="position:absolute;left:954px;top:244px" width="12" height="12"><path d="M3.3 5.3L5.5 8.6L9.4 3.2" stroke="#000" stroke-width="2.1" fill="none"/></svg>
<div class="t m" style="left:1001px;top:244px;width:62px;text-align:right">0<span class="d">.</span>00</div>
<div style="position:absolute;left:180px;top:259px;width:13px;height:17px;background:#bccbe3;border-top:1px solid #fff;border-left:1px solid #fff;border-right:1px solid #000;border-bottom:1px solid #000;box-shadow:inset -1px -1px 0 #7a7a7a"></div>
<div style="position:absolute;left:193px;top:259px;width:875px;height:17px;background:#ecf0f8"></div>
<div style="position:absolute;left:193px;top:275px;width:875px;height:1px;background:#c3c3c3"></div>
<div style="left:204px;top:261px;width:12px;height:12px;background:#fff;border-top:1px solid #858585;border-left:1px solid #858585;border-right:1px solid #e3e3e3;border-bottom:1px solid #e3e3e3;box-shadow:inset 1px 1px 0 #5a5a5a"></div>
<div class="t m" style="left:231px;top:261px">01003</div>
<div class="t" style="left:292px;top:261px;">草莓</div>
<div class="t" style="left:373px;top:261px;">斤</div>
<div class="t m" style="left:426px;top:261px;width:72px;text-align:right">20<span class="d">.</span>00</div>
<div class="t m" style="left:502px;top:261px;width:62px;text-align:right">15<span class="d">.</span>00</div>
<div style="left:595px;top:261px;width:12px;height:12px;background:#fff;border-top:1px solid #858585;border-left:1px solid #858585;border-right:1px solid #e3e3e3;border-bottom:1px solid #e3e3e3;box-shadow:inset 1px 1px 0 #5a5a5a"></div>
<div style="left:661px;top:261px;width:12px;height:12px;background:#fff;border-top:1px solid #858585;border-left:1px solid #858585;border-right:1px solid #e3e3e3;border-bottom:1px solid #e3e3e3;box-shadow:inset 1px 1px 0 #5a5a5a"></div><svg style="position:absolute;left:661px;top:261px" width="12" height="12"><path d="M3.3 5.3L5.5 8.6L9.4 3.2" stroke="#000" stroke-width="2.1" fill="none"/></svg>
<div class="t m" style="left:700px;top:261px;width:82px;text-align:right">0</div>
<div style="left:813px;top:261px;width:12px;height:12px;background:#fff;border-top:1px solid #858585;border-left:1px solid #858585;border-right:1px solid #e3e3e3;border-bottom:1px solid #e3e3e3;box-shadow:inset 1px 1px 0 #5a5a5a"></div>
<div class="t m" style="left:852px;top:261px;width:62px;text-align:right">0<span class="d">.</span>00</div>
<div style="left:954px;top:261px;width:12px;height:12px;background:#fff;border-top:1px solid #858585;border-left:1px solid #858585;border-right:1px solid #e3e3e3;border-bottom:1px solid #e3e3e3;box-shadow:inset 1px 1px 0 #5a5a5a"></div><svg style="position:absolute;left:954px;top:261px" width="12" height="12"><path d="M3.3 5.3L5.5 8.6L9.4 3.2" stroke="#000" stroke-width="2.1" fill="none"/></svg>
<div class="t m" style="left:1001px;top:261px;width:62px;text-align:right">0<span class="d">.</span>00</div>
<div style="position:absolute;left:180px;top:276px;width:13px;height:17px;background:#bccbe3;border-top:1px solid #fff;border-left:1px solid #fff;border-right:1px solid #000;border-bottom:1px solid #000;box-shadow:inset -1px -1px 0 #7a7a7a"></div>
<div style="position:absolute;left:193px;top:276px;width:875px;height:17px;background:#ffffff"></div>
<div style="position:absolute;left:193px;top:292px;width:875px;height:1px;background:#c3c3c3"></div>
<div style="left:204px;top:278px;width:12px;height:12px;background:#fff;border-top:1px solid #858585;border-left:1px solid #858585;border-right:1px solid #e3e3e3;border-bottom:1px solid #e3e3e3;box-shadow:inset 1px 1px 0 #5a5a5a"></div>
<div class="t m" style="left:231px;top:278px">01004</div>
<div class="t" style="left:292px;top:278px;">丑桔</div>
<div class="t" style="left:373px;top:278px;">斤</div>
<div class="t m" style="left:426px;top:278px;width:72px;text-align:right">8<span class="d">.</span>00</div>
<div class="t m" style="left:502px;top:278px;width:62px;text-align:right">5<span class="d">.</span>00</div>
<div style="left:595px;top:278px;width:12px;height:12px;background:#fff;border-top:1px solid #858585;border-left:1px solid #858585;border-right:1px solid #e3e3e3;border-bottom:1px solid #e3e3e3;box-shadow:inset 1px 1px 0 #5a5a5a"></div>
<div style="left:661px;top:278px;width:12px;height:12px;background:#fff;border-top:1px solid #858585;border-left:1px solid #858585;border-right:1px solid #e3e3e3;border-bottom:1px solid #e3e3e3;box-shadow:inset 1px 1px 0 #5a5a5a"></div><svg style="position:absolute;left:661px;top:278px" width="12" height="12"><path d="M3.3 5.3L5.5 8.6L9.4 3.2" stroke="#000" stroke-width="2.1" fill="none"/></svg>
<div class="t m" style="left:700px;top:278px;width:82px;text-align:right">0</div>
<div style="left:813px;top:278px;width:12px;height:12px;background:#fff;border-top:1px solid #858585;border-left:1px solid #858585;border-right:1px solid #e3e3e3;border-bottom:1px solid #e3e3e3;box-shadow:inset 1px 1px 0 #5a5a5a"></div>
<div class="t m" style="left:852px;top:278px;width:62px;text-align:right">0<span class="d">.</span>00</div>
<div style="left:954px;top:278px;width:12px;height:12px;background:#fff;border-top:1px solid #858585;border-left:1px solid #858585;border-right:1px solid #e3e3e3;border-bottom:1px solid #e3e3e3;box-shadow:inset 1px 1px 0 #5a5a5a"></div><svg style="position:absolute;left:954px;top:278px" width="12" height="12"><path d="M3.3 5.3L5.5 8.6L9.4 3.2" stroke="#000" stroke-width="2.1" fill="none"/></svg>
<div class="t m" style="left:1001px;top:278px;width:62px;text-align:right">0<span class="d">.</span>00</div>
<div style="position:absolute;left:180px;top:293px;width:13px;height:17px;background:#bccbe3;border-top:1px solid #fff;border-left:1px solid #fff;border-right:1px solid #000;border-bottom:1px solid #000;box-shadow:inset -1px -1px 0 #7a7a7a"></div>
<div style="position:absolute;left:193px;top:293px;width:875px;height:17px;background:#ecf0f8"></div>
<div style="position:absolute;left:193px;top:309px;width:875px;height:1px;background:#c3c3c3"></div>
<div style="left:204px;top:295px;width:12px;height:12px;background:#fff;border-top:1px solid #858585;border-left:1px solid #858585;border-right:1px solid #e3e3e3;border-bottom:1px solid #e3e3e3;box-shadow:inset 1px 1px 0 #5a5a5a"></div>
<div class="t m" style="left:231px;top:295px">01005</div>
<div class="t" style="left:292px;top:295px;">哈密瓜</div>
<div class="t" style="left:373px;top:295px;">斤</div>
<div class="t m" style="left:426px;top:295px;width:72px;text-align:right">5<span class="d">.</span>00</div>
<div class="t m" style="left:502px;top:295px;width:62px;text-align:right">3<span class="d">.</span>00</div>
<div style="left:595px;top:295px;width:12px;height:12px;background:#fff;border-top:1px solid #858585;border-left:1px solid #858585;border-right:1px solid #e3e3e3;border-bottom:1px solid #e3e3e3;box-shadow:inset 1px 1px 0 #5a5a5a"></div>
<div style="left:661px;top:295px;width:12px;height:12px;background:#fff;border-top:1px solid #858585;border-left:1px solid #858585;border-right:1px solid #e3e3e3;border-bottom:1px solid #e3e3e3;box-shadow:inset 1px 1px 0 #5a5a5a"></div><svg style="position:absolute;left:661px;top:295px" width="12" height="12"><path d="M3.3 5.3L5.5 8.6L9.4 3.2" stroke="#000" stroke-width="2.1" fill="none"/></svg>
<div class="t m" style="left:700px;top:295px;width:82px;text-align:right">0</div>
<div style="left:813px;top:295px;width:12px;height:12px;background:#fff;border-top:1px solid #858585;border-left:1px solid #858585;border-right:1px solid #e3e3e3;border-bottom:1px solid #e3e3e3;box-shadow:inset 1px 1px 0 #5a5a5a"></div>
<div class="t m" style="left:852px;top:295px;width:62px;text-align:right">0<span class="d">.</span>00</div>
<div style="left:954px;top:295px;width:12px;height:12px;background:#fff;border-top:1px solid #858585;border-left:1px solid #858585;border-right:1px solid #e3e3e3;border-bottom:1px solid #e3e3e3;box-shadow:inset 1px 1px 0 #5a5a5a"></div><svg style="position:absolute;left:954px;top:295px" width="12" height="12"><path d="M3.3 5.3L5.5 8.6L9.4 3.2" stroke="#000" stroke-width="2.1" fill="none"/></svg>
<div class="t m" style="left:1001px;top:295px;width:62px;text-align:right">0<span class="d">.</span>00</div>
<div style="position:absolute;left:180px;top:310px;width:13px;height:17px;background:#bccbe3;border-top:1px solid #fff;border-left:1px solid #fff;border-right:1px solid #000;border-bottom:1px solid #000;box-shadow:inset -1px -1px 0 #7a7a7a"></div>
<div style="position:absolute;left:193px;top:310px;width:875px;height:17px;background:#ffffff"></div>
<div style="position:absolute;left:193px;top:326px;width:875px;height:1px;background:#c3c3c3"></div>
<div style="left:204px;top:312px;width:12px;height:12px;background:#fff;border-top:1px solid #858585;border-left:1px solid #858585;border-right:1px solid #e3e3e3;border-bottom:1px solid #e3e3e3;box-shadow:inset 1px 1px 0 #5a5a5a"></div>
<div class="t m" style="left:231px;top:312px">01006</div>
<div class="t" style="left:292px;top:312px;">金桔</div>
<div class="t" style="left:373px;top:312px;">斤</div>
<div class="t m" style="left:426px;top:312px;width:72px;text-align:right">12<span class="d">.</span>00</div>
<div class="t m" style="left:502px;top:312px;width:62px;text-align:right">8<span class="d">.</span>00</div>
<div style="left:595px;top:312px;width:12px;height:12px;background:#fff;border-top:1px solid #858585;border-left:1px solid #858585;border-right:1px solid #e3e3e3;border-bottom:1px solid #e3e3e3;box-shadow:inset 1px 1px 0 #5a5a5a"></div>
<div style="left:661px;top:312px;width:12px;height:12px;background:#fff;border-top:1px solid #858585;border-left:1px solid #858585;border-right:1px solid #e3e3e3;border-bottom:1px solid #e3e3e3;box-shadow:inset 1px 1px 0 #5a5a5a"></div><svg style="position:absolute;left:661px;top:312px" width="12" height="12"><path d="M3.3 5.3L5.5 8.6L9.4 3.2" stroke="#000" stroke-width="2.1" fill="none"/></svg>
<div class="t m" style="left:700px;top:312px;width:82px;text-align:right">0</div>
<div style="left:813px;top:312px;width:12px;height:12px;background:#fff;border-top:1px solid #858585;border-left:1px solid #858585;border-right:1px solid #e3e3e3;border-bottom:1px solid #e3e3e3;box-shadow:inset 1px 1px 0 #5a5a5a"></div>
<div class="t m" style="left:852px;top:312px;width:62px;text-align:right">0<span class="d">.</span>00</div>
<div style="left:954px;top:312px;width:12px;height:12px;background:#fff;border-top:1px solid #858585;border-left:1px solid #858585;border-right:1px solid #e3e3e3;border-bottom:1px solid #e3e3e3;box-shadow:inset 1px 1px 0 #5a5a5a"></div><svg style="position:absolute;left:954px;top:312px" width="12" height="12"><path d="M3.3 5.3L5.5 8.6L9.4 3.2" stroke="#000" stroke-width="2.1" fill="none"/></svg>
<div class="t m" style="left:1001px;top:312px;width:62px;text-align:right">0<span class="d">.</span>00</div>
<div style="position:absolute;left:180px;top:327px;width:13px;height:17px;background:#bccbe3;border-top:1px solid #fff;border-left:1px solid #fff;border-right:1px solid #000;border-bottom:1px solid #000;box-shadow:inset -1px -1px 0 #7a7a7a"></div>
<div style="position:absolute;left:193px;top:327px;width:875px;height:17px;background:#ecf0f8"></div>
<div style="position:absolute;left:193px;top:343px;width:875px;height:1px;background:#c3c3c3"></div>
<div style="left:204px;top:329px;width:12px;height:12px;background:#fff;border-top:1px solid #858585;border-left:1px solid #858585;border-right:1px solid #e3e3e3;border-bottom:1px solid #e3e3e3;box-shadow:inset 1px 1px 0 #5a5a5a"></div>
<div class="t m" style="left:231px;top:329px">01007</div>
<div class="t" style="left:292px;top:329px;">桔子</div>
<div class="t" style="left:373px;top:329px;">斤</div>
<div class="t m" style="left:426px;top:329px;width:72px;text-align:right">4<span class="d">.</span>50</div>
<div class="t m" style="left:502px;top:329px;width:62px;text-align:right">3<span class="d">.</span>00</div>
<div style="left:595px;top:329px;width:12px;height:12px;background:#fff;border-top:1px solid #858585;border-left:1px solid #858585;border-right:1px solid #e3e3e3;border-bottom:1px solid #e3e3e3;box-shadow:inset 1px 1px 0 #5a5a5a"></div>
<div style="left:661px;top:329px;width:12px;height:12px;background:#fff;border-top:1px solid #858585;border-left:1px solid #858585;border-right:1px solid #e3e3e3;border-bottom:1px solid #e3e3e3;box-shadow:inset 1px 1px 0 #5a5a5a"></div><svg style="position:absolute;left:661px;top:329px" width="12" height="12"><path d="M3.3 5.3L5.5 8.6L9.4 3.2" stroke="#000" stroke-width="2.1" fill="none"/></svg>
<div class="t m" style="left:700px;top:329px;width:82px;text-align:right">0</div>
<div style="left:813px;top:329px;width:12px;height:12px;background:#fff;border-top:1px solid #858585;border-left:1px solid #858585;border-right:1px solid #e3e3e3;border-bottom:1px solid #e3e3e3;box-shadow:inset 1px 1px 0 #5a5a5a"></div>
<div class="t m" style="left:852px;top:329px;width:62px;text-align:right">0<span class="d">.</span>00</div>
<div style="left:954px;top:329px;width:12px;height:12px;background:#fff;border-top:1px solid #858585;border-left:1px solid #858585;border-right:1px solid #e3e3e3;border-bottom:1px solid #e3e3e3;box-shadow:inset 1px 1px 0 #5a5a5a"></div><svg style="position:absolute;left:954px;top:329px" width="12" height="12"><path d="M3.3 5.3L5.5 8.6L9.4 3.2" stroke="#000" stroke-width="2.1" fill="none"/></svg>
<div class="t m" style="left:1001px;top:329px;width:62px;text-align:right">0<span class="d">.</span>00</div>
<div style="position:absolute;left:180px;top:344px;width:13px;height:17px;background:#bccbe3;border-top:1px solid #fff;border-left:1px solid #fff;border-right:1px solid #000;border-bottom:1px solid #000;box-shadow:inset -1px -1px 0 #7a7a7a"></div>
<div style="position:absolute;left:193px;top:344px;width:875px;height:17px;background:#ffffff"></div>
<div style="position:absolute;left:193px;top:360px;width:875px;height:1px;background:#c3c3c3"></div>
<div style="left:204px;top:346px;width:12px;height:12px;background:#fff;border-top:1px solid #858585;border-left:1px solid #858585;border-right:1px solid #e3e3e3;border-bottom:1px solid #e3e3e3;box-shadow:inset 1px 1px 0 #5a5a5a"></div>
<div class="t m" style="left:231px;top:346px">01008</div>
<div class="t" style="left:292px;top:346px;">沙糖桔</div>
<div class="t" style="left:373px;top:346px;">斤</div>
<div class="t m" style="left:426px;top:346px;width:72px;text-align:right">6<span class="d">.</span>00</div>
<div class="t m" style="left:502px;top:346px;width:62px;text-align:right">4<span class="d">.</span>50</div>
<div style="left:595px;top:346px;width:12px;height:12px;background:#fff;border-top:1px solid #858585;border-left:1px solid #858585;border-right:1px solid #e3e3e3;border-bottom:1px solid #e3e3e3;box-shadow:inset 1px 1px 0 #5a5a5a"></div>
<div style="left:661px;top:346px;width:12px;height:12px;background:#fff;border-top:1px solid #858585;border-left:1px solid #858585;border-right:1px solid #e3e3e3;border-bottom:1px solid #e3e3e3;box-shadow:inset 1px 1px 0 #5a5a5a"></div><svg style="position:absolute;left:661px;top:346px" width="12" height="12"><path d="M3.3 5.3L5.5 8.6L9.4 3.2" stroke="#000" stroke-width="2.1" fill="none"/></svg>
<div class="t m" style="left:700px;top:346px;width:82px;text-align:right">0</div>
<div style="left:813px;top:346px;width:12px;height:12px;background:#fff;border-top:1px solid #858585;border-left:1px solid #858585;border-right:1px solid #e3e3e3;border-bottom:1px solid #e3e3e3;box-shadow:inset 1px 1px 0 #5a5a5a"></div>
<div class="t m" style="left:852px;top:346px;width:62px;text-align:right">0<span class="d">.</span>00</div>
<div style="left:954px;top:346px;width:12px;height:12px;background:#fff;border-top:1px solid #858585;border-left:1px solid #858585;border-right:1px solid #e3e3e3;border-bottom:1px solid #e3e3e3;box-shadow:inset 1px 1px 0 #5a5a5a"></div><svg style="position:absolute;left:954px;top:346px" width="12" height="12"><path d="M3.3 5.3L5.5 8.6L9.4 3.2" stroke="#000" stroke-width="2.1" fill="none"/></svg>
<div class="t m" style="left:1001px;top:346px;width:62px;text-align:right">0<span class="d">.</span>00</div>
<div style="position:absolute;left:180px;top:361px;width:13px;height:17px;background:#bccbe3;border-top:1px solid #fff;border-left:1px solid #fff;border-right:1px solid #000;border-bottom:1px solid #000;box-shadow:inset -1px -1px 0 #7a7a7a"></div>
<div style="position:absolute;left:193px;top:361px;width:875px;height:17px;background:#ecf0f8"></div>
<div style="position:absolute;left:193px;top:377px;width:875px;height:1px;background:#c3c3c3"></div>
<div style="left:204px;top:363px;width:12px;height:12px;background:#fff;border-top:1px solid #858585;border-left:1px solid #858585;border-right:1px solid #e3e3e3;border-bottom:1px solid #e3e3e3;box-shadow:inset 1px 1px 0 #5a5a5a"></div>
<div class="t m" style="left:231px;top:363px">01009</div>
<div class="t" style="left:292px;top:363px;">榴莲</div>
<div class="t" style="left:373px;top:363px;">个</div>
<div class="t m" style="left:426px;top:363px;width:72px;text-align:right">35<span class="d">.</span>00</div>
<div class="t m" style="left:502px;top:363px;width:62px;text-align:right">26<span class="d">.</span>00</div>
<div style="left:595px;top:363px;width:12px;height:12px;background:#fff;border-top:1px solid #858585;border-left:1px solid #858585;border-right:1px solid #e3e3e3;border-bottom:1px solid #e3e3e3;box-shadow:inset 1px 1px 0 #5a5a5a"></div>
<div style="left:661px;top:363px;width:12px;height:12px;background:#fff;border-top:1px solid #858585;border-left:1px solid #858585;border-right:1px solid #e3e3e3;border-bottom:1px solid #e3e3e3;box-shadow:inset 1px 1px 0 #5a5a5a"></div><svg style="position:absolute;left:661px;top:363px" width="12" height="12"><path d="M3.3 5.3L5.5 8.6L9.4 3.2" stroke="#000" stroke-width="2.1" fill="none"/></svg>
<div class="t m" style="left:700px;top:363px;width:82px;text-align:right">0</div>
<div style="left:813px;top:363px;width:12px;height:12px;background:#fff;border-top:1px solid #858585;border-left:1px solid #858585;border-right:1px solid #e3e3e3;border-bottom:1px solid #e3e3e3;box-shadow:inset 1px 1px 0 #5a5a5a"></div>
<div class="t m" style="left:852px;top:363px;width:62px;text-align:right">0<span class="d">.</span>00</div>
<div style="left:954px;top:363px;width:12px;height:12px;background:#fff;border-top:1px solid #858585;border-left:1px solid #858585;border-right:1px solid #e3e3e3;border-bottom:1px solid #e3e3e3;box-shadow:inset 1px 1px 0 #5a5a5a"></div><svg style="position:absolute;left:954px;top:363px" width="12" height="12"><path d="M3.3 5.3L5.5 8.6L9.4 3.2" stroke="#000" stroke-width="2.1" fill="none"/></svg>
<div class="t m" style="left:1001px;top:363px;width:62px;text-align:right">0<span class="d">.</span>00</div>
<div style="position:absolute;left:180px;top:378px;width:13px;height:17px;background:#bccbe3;border-top:1px solid #fff;border-left:1px solid #fff;border-right:1px solid #000;border-bottom:1px solid #000;box-shadow:inset -1px -1px 0 #7a7a7a"></div>
<div style="position:absolute;left:193px;top:378px;width:875px;height:17px;background:#ffffff"></div>
<div style="position:absolute;left:193px;top:394px;width:875px;height:1px;background:#c3c3c3"></div>
<div style="left:204px;top:380px;width:12px;height:12px;background:#fff;border-top:1px solid #858585;border-left:1px solid #858585;border-right:1px solid #e3e3e3;border-bottom:1px solid #e3e3e3;box-shadow:inset 1px 1px 0 #5a5a5a"></div>
<div class="t m" style="left:231px;top:380px">01010</div>
<div class="t" style="left:292px;top:380px;">龙眼</div>
<div class="t" style="left:373px;top:380px;">斤</div>
<div class="t m" style="left:426px;top:380px;width:72px;text-align:right">10<span class="d">.</span>00</div>
<div class="t m" style="left:502px;top:380px;width:62px;text-align:right">8<span class="d">.</span>00</div>
<div style="left:595px;top:380px;width:12px;height:12px;background:#fff;border-top:1px solid #858585;border-left:1px solid #858585;border-right:1px solid #e3e3e3;border-bottom:1px solid #e3e3e3;box-shadow:inset 1px 1px 0 #5a5a5a"></div>
<div style="left:661px;top:380px;width:12px;height:12px;background:#fff;border-top:1px solid #858585;border-left:1px solid #858585;border-right:1px solid #e3e3e3;border-bottom:1px solid #e3e3e3;box-shadow:inset 1px 1px 0 #5a5a5a"></div><svg style="position:absolute;left:661px;top:380px" width="12" height="12"><path d="M3.3 5.3L5.5 8.6L9.4 3.2" stroke="#000" stroke-width="2.1" fill="none"/></svg>
<div class="t m" style="left:700px;top:380px;width:82px;text-align:right">0</div>
<div style="left:813px;top:380px;width:12px;height:12px;background:#fff;border-top:1px solid #858585;border-left:1px solid #858585;border-right:1px solid #e3e3e3;border-bottom:1px solid #e3e3e3;box-shadow:inset 1px 1px 0 #5a5a5a"></div>
<div class="t m" style="left:852px;top:380px;width:62px;text-align:right">0<span class="d">.</span>00</div>
<div style="left:954px;top:380px;width:12px;height:12px;background:#fff;border-top:1px solid #858585;border-left:1px solid #858585;border-right:1px solid #e3e3e3;border-bottom:1px solid #e3e3e3;box-shadow:inset 1px 1px 0 #5a5a5a"></div><svg style="position:absolute;left:954px;top:380px" width="12" height="12"><path d="M3.3 5.3L5.5 8.6L9.4 3.2" stroke="#000" stroke-width="2.1" fill="none"/></svg>
<div class="t m" style="left:1001px;top:380px;width:62px;text-align:right">0<span class="d">.</span>00</div>
<div style="position:absolute;left:180px;top:395px;width:13px;height:17px;background:#bccbe3;border-top:1px solid #fff;border-left:1px solid #fff;border-right:1px solid #000;border-bottom:1px solid #000;box-shadow:inset -1px -1px 0 #7a7a7a"></div>
<div style="position:absolute;left:193px;top:395px;width:875px;height:17px;background:#ecf0f8"></div>
<div style="position:absolute;left:193px;top:411px;width:875px;height:1px;background:#c3c3c3"></div>
<div style="left:204px;top:397px;width:12px;height:12px;background:#fff;border-top:1px solid #858585;border-left:1px solid #858585;border-right:1px solid #e3e3e3;border-bottom:1px solid #e3e3e3;box-shadow:inset 1px 1px 0 #5a5a5a"></div>
<div class="t m" style="left:231px;top:397px">01011</div>
<div class="t" style="left:292px;top:397px;">芒果</div>
<div class="t" style="left:373px;top:397px;">斤</div>
<div class="t m" style="left:426px;top:397px;width:72px;text-align:right">20<span class="d">.</span>00</div>
<div class="t m" style="left:502px;top:397px;width:62px;text-align:right">16<span class="d">.</span>00</div>
<div style="left:595px;top:397px;width:12px;height:12px;background:#fff;border-top:1px solid #858585;border-left:1px solid #858585;border-right:1px solid #e3e3e3;border-bottom:1px solid #e3e3e3;box-shadow:inset 1px 1px 0 #5a5a5a"></div>
<div style="left:661px;top:397px;width:12px;height:12px;background:#fff;border-top:1px solid #858585;border-left:1px solid #858585;border-right:1px solid #e3e3e3;border-bottom:1px solid #e3e3e3;box-shadow:inset 1px 1px 0 #5a5a5a"></div><svg style="position:absolute;left:661px;top:397px" width="12" height="12"><path d="M3.3 5.3L5.5 8.6L9.4 3.2" stroke="#000" stroke-width="2.1" fill="none"/></svg>
<div class="t m" style="left:700px;top:397px;width:82px;text-align:right">0</div>
<div style="left:813px;top:397px;width:12px;height:12px;background:#fff;border-top:1px solid #858585;border-left:1px solid #858585;border-right:1px solid #e3e3e3;border-bottom:1px solid #e3e3e3;box-shadow:inset 1px 1px 0 #5a5a5a"></div>
<div class="t m" style="left:852px;top:397px;width:62px;text-align:right">0<span class="d">.</span>00</div>
<div style="left:954px;top:397px;width:12px;height:12px;background:#fff;border-top:1px solid #858585;border-left:1px solid #858585;border-right:1px solid #e3e3e3;border-bottom:1px solid #e3e3e3;box-shadow:inset 1px 1px 0 #5a5a5a"></div><svg style="position:absolute;left:954px;top:397px" width="12" height="12"><path d="M3.3 5.3L5.5 8.6L9.4 3.2" stroke="#000" stroke-width="2.1" fill="none"/></svg>
<div class="t m" style="left:1001px;top:397px;width:62px;text-align:right">0<span class="d">.</span>00</div>
<div style="position:absolute;left:180px;top:412px;width:13px;height:17px;background:#bccbe3;border-top:1px solid #fff;border-left:1px solid #fff;border-right:1px solid #000;border-bottom:1px solid #000;box-shadow:inset -1px -1px 0 #7a7a7a"></div>
<div style="position:absolute;left:193px;top:412px;width:875px;height:17px;background:#ffffff"></div>
<div style="position:absolute;left:193px;top:428px;width:875px;height:1px;background:#c3c3c3"></div>
<div style="left:204px;top:414px;width:12px;height:12px;background:#fff;border-top:1px solid #858585;border-left:1px solid #858585;border-right:1px solid #e3e3e3;border-bottom:1px solid #e3e3e3;box-shadow:inset 1px 1px 0 #5a5a5a"></div>
<div class="t m" style="left:231px;top:414px">01012</div>
<div class="t" style="left:292px;top:414px;">蜜瓜</div>
<div class="t" style="left:373px;top:414px;">斤</div>
<div class="t m" style="left:426px;top:414px;width:72px;text-align:right">15<span class="d">.</span>00</div>
<div class="t m" style="left:502px;top:414px;width:62px;text-align:right">12<span class="d">.</span>00</div>
<div style="left:595px;top:414px;width:12px;height:12px;background:#fff;border-top:1px solid #858585;border-left:1px solid #858585;border-right:1px solid #e3e3e3;border-bottom:1px solid #e3e3e3;box-shadow:inset 1px 1px 0 #5a5a5a"></div>
<div style="left:661px;top:414px;width:12px;height:12px;background:#fff;border-top:1px solid #858585;border-left:1px solid #858585;border-right:1px solid #e3e3e3;border-bottom:1px solid #e3e3e3;box-shadow:inset 1px 1px 0 #5a5a5a"></div><svg style="position:absolute;left:661px;top:414px" width="12" height="12"><path d="M3.3 5.3L5.5 8.6L9.4 3.2" stroke="#000" stroke-width="2.1" fill="none"/></svg>
<div class="t m" style="left:700px;top:414px;width:82px;text-align:right">0</div>
<div style="left:813px;top:414px;width:12px;height:12px;background:#fff;border-top:1px solid #858585;border-left:1px solid #858585;border-right:1px solid #e3e3e3;border-bottom:1px solid #e3e3e3;box-shadow:inset 1px 1px 0 #5a5a5a"></div>
<div class="t m" style="left:852px;top:414px;width:62px;text-align:right">0<span class="d">.</span>00</div>
<div style="left:954px;top:414px;width:12px;height:12px;background:#fff;border-top:1px solid #858585;border-left:1px solid #858585;border-right:1px solid #e3e3e3;border-bottom:1px solid #e3e3e3;box-shadow:inset 1px 1px 0 #5a5a5a"></div><svg style="position:absolute;left:954px;top:414px" width="12" height="12"><path d="M3.3 5.3L5.5 8.6L9.4 3.2" stroke="#000" stroke-width="2.1" fill="none"/></svg>
<div class="t m" style="left:1001px;top:414px;width:62px;text-align:right">0<span class="d">.</span>00</div>
<div style="position:absolute;left:180px;top:429px;width:13px;height:17px;background:#bccbe3;border-top:1px solid #fff;border-left:1px solid #fff;border-right:1px solid #000;border-bottom:1px solid #000;box-shadow:inset -1px -1px 0 #7a7a7a"></div>
<div style="position:absolute;left:193px;top:429px;width:875px;height:17px;background:#ecf0f8"></div>
<div style="position:absolute;left:193px;top:445px;width:875px;height:1px;background:#c3c3c3"></div>
<div style="left:204px;top:431px;width:12px;height:12px;background:#fff;border-top:1px solid #858585;border-left:1px solid #858585;border-right:1px solid #e3e3e3;border-bottom:1px solid #e3e3e3;box-shadow:inset 1px 1px 0 #5a5a5a"></div>
<div class="t m" style="left:231px;top:431px">01013</div>
<div class="t" style="left:292px;top:431px;">葡萄</div>
<div class="t" style="left:373px;top:431px;">斤</div>
<div class="t m" style="left:426px;top:431px;width:72px;text-align:right">8<span class="d">.</span>00</div>
<div class="t m" style="left:502px;top:431px;width:62px;text-align:right">6<span class="d">.</span>00</div>
<div style="left:595px;top:431px;width:12px;height:12px;background:#fff;border-top:1px solid #858585;border-left:1px solid #858585;border-right:1px solid #e3e3e3;border-bottom:1px solid #e3e3e3;box-shadow:inset 1px 1px 0 #5a5a5a"></div>
<div style="left:661px;top:431px;width:12px;height:12px;background:#fff;border-top:1px solid #858585;border-left:1px solid #858585;border-right:1px solid #e3e3e3;border-bottom:1px solid #e3e3e3;box-shadow:inset 1px 1px 0 #5a5a5a"></div><svg style="position:absolute;left:661px;top:431px" width="12" height="12"><path d="M3.3 5.3L5.5 8.6L9.4 3.2" stroke="#000" stroke-width="2.1" fill="none"/></svg>
<div class="t m" style="left:700px;top:431px;width:82px;text-align:right">0</div>
<div style="left:813px;top:431px;width:12px;height:12px;background:#fff;border-top:1px solid #858585;border-left:1px solid #858585;border-right:1px solid #e3e3e3;border-bottom:1px solid #e3e3e3;box-shadow:inset 1px 1px 0 #5a5a5a"></div>
<div class="t m" style="left:852px;top:431px;width:62px;text-align:right">0<span class="d">.</span>00</div>
<div style="left:954px;top:431px;width:12px;height:12px;background:#fff;border-top:1px solid #858585;border-left:1px solid #858585;border-right:1px solid #e3e3e3;border-bottom:1px solid #e3e3e3;box-shadow:inset 1px 1px 0 #5a5a5a"></div><svg style="position:absolute;left:954px;top:431px" width="12" height="12"><path d="M3.3 5.3L5.5 8.6L9.4 3.2" stroke="#000" stroke-width="2.1" fill="none"/></svg>
<div class="t m" style="left:1001px;top:431px;width:62px;text-align:right">0<span class="d">.</span>00</div>
<div style="position:absolute;left:180px;top:446px;width:13px;height:17px;background:#bccbe3;border-top:1px solid #fff;border-left:1px solid #fff;border-right:1px solid #000;border-bottom:1px solid #000;box-shadow:inset -1px -1px 0 #7a7a7a"></div>
<div style="position:absolute;left:193px;top:446px;width:875px;height:17px;background:#ffffff"></div>
<div style="position:absolute;left:193px;top:462px;width:875px;height:1px;background:#c3c3c3"></div>
<div style="left:204px;top:448px;width:12px;height:12px;background:#fff;border-top:1px solid #858585;border-left:1px solid #858585;border-right:1px solid #e3e3e3;border-bottom:1px solid #e3e3e3;box-shadow:inset 1px 1px 0 #5a5a5a"></div>
<div class="t m" style="left:231px;top:448px">01014</div>
<div class="t" style="left:292px;top:448px;">青芒</div>
<div class="t" style="left:373px;top:448px;">斤</div>
<div class="t m" style="left:426px;top:448px;width:72px;text-align:right">20<span class="d">.</span>00</div>
<div class="t m" style="left:502px;top:448px;width:62px;text-align:right">18<span class="d">.</span>00</div>
<div style="left:595px;top:448px;width:12px;height:12px;background:#fff;border-top:1px solid #858585;border-left:1px solid #858585;border-right:1px solid #e3e3e3;border-bottom:1px solid #e3e3e3;box-shadow:inset 1px 1px 0 #5a5a5a"></div>
<div style="left:661px;top:448px;width:12px;height:12px;background:#fff;border-top:1px solid #858585;border-left:1px solid #858585;border-right:1px solid #e3e3e3;border-bottom:1px solid #e3e3e3;box-shadow:inset 1px 1px 0 #5a5a5a"></div><svg style="position:absolute;left:661px;top:448px" width="12" height="12"><path d="M3.3 5.3L5.5 8.6L9.4 3.2" stroke="#000" stroke-width="2.1" fill="none"/></svg>
<div class="t m" style="left:700px;top:448px;width:82px;text-align:right">0</div>
<div style="left:813px;top:448px;width:12px;height:12px;background:#fff;border-top:1px solid #858585;border-left:1px solid #858585;border-right:1px solid #e3e3e3;border-bottom:1px solid #e3e3e3;box-shadow:inset 1px 1px 0 #5a5a5a"></div>
<div class="t m" style="left:852px;top:448px;width:62px;text-align:right">0<span class="d">.</span>00</div>
<div style="left:954px;top:448px;width:12px;height:12px;background:#fff;border-top:1px solid #858585;border-left:1px solid #858585;border-right:1px solid #e3e3e3;border-bottom:1px solid #e3e3e3;box-shadow:inset 1px 1px 0 #5a5a5a"></div><svg style="position:absolute;left:954px;top:448px" width="12" height="12"><path d="M3.3 5.3L5.5 8.6L9.4 3.2" stroke="#000" stroke-width="2.1" fill="none"/></svg>
<div class="t m" style="left:1001px;top:448px;width:62px;text-align:right">0<span class="d">.</span>00</div>
<div style="position:absolute;left:180px;top:463px;width:13px;height:17px;background:#bccbe3;border-top:1px solid #fff;border-left:1px solid #fff;border-right:1px solid #000;border-bottom:1px solid #000;box-shadow:inset -1px -1px 0 #7a7a7a"></div>
<div style="position:absolute;left:193px;top:463px;width:875px;height:17px;background:#ecf0f8"></div>
<div style="position:absolute;left:193px;top:479px;width:875px;height:1px;background:#c3c3c3"></div>
<div style="left:204px;top:465px;width:12px;height:12px;background:#fff;border-top:1px solid #858585;border-left:1px solid #858585;border-right:1px solid #e3e3e3;border-bottom:1px solid #e3e3e3;box-shadow:inset 1px 1px 0 #5a5a5a"></div>
<div class="t m" style="left:231px;top:465px">01015</div>
<div class="t" style="left:292px;top:465px;">乌梅</div>
<div class="t" style="left:373px;top:465px;">斤</div>
<div class="t m" style="left:426px;top:465px;width:72px;text-align:right">6<span class="d">.</span>00</div>
<div class="t m" style="left:502px;top:465px;width:62px;text-align:right">4<span class="d">.</span>80</div>
<div style="left:595px;top:465px;width:12px;height:12px;background:#fff;border-top:1px solid #858585;border-left:1px solid #858585;border-right:1px solid #e3e3e3;border-bottom:1px solid #e3e3e3;box-shadow:inset 1px 1px 0 #5a5a5a"></div>
<div style="left:661px;top:465px;width:12px;height:12px;background:#fff;border-top:1px solid #858585;border-left:1px solid #858585;border-right:1px solid #e3e3e3;border-bottom:1px solid #e3e3e3;box-shadow:inset 1px 1px 0 #5a5a5a"></div><svg style="position:absolute;left:661px;top:465px" width="12" height="12"><path d="M3.3 5.3L5.5 8.6L9.4 3.2" stroke="#000" stroke-width="2.1" fill="none"/></svg>
<div class="t m" style="left:700px;top:465px;width:82px;text-align:right">0</div>
<div style="left:813px;top:465px;width:12px;height:12px;background:#fff;border-top:1px solid #858585;border-left:1px solid #858585;border-right:1px solid #e3e3e3;border-bottom:1px solid #e3e3e3;box-shadow:inset 1px 1px 0 #5a5a5a"></div>
<div class="t m" style="left:852px;top:465px;width:62px;text-align:right">0<span class="d">.</span>00</div>
<div style="left:954px;top:465px;width:12px;height:12px;background:#fff;border-top:1px solid #858585;border-left:1px solid #858585;border-right:1px solid #e3e3e3;border-bottom:1px solid #e3e3e3;box-shadow:inset 1px 1px 0 #5a5a5a"></div><svg style="position:absolute;left:954px;top:465px" width="12" height="12"><path d="M3.3 5.3L5.5 8.6L9.4 3.2" stroke="#000" stroke-width="2.1" fill="none"/></svg>
<div class="t m" style="left:1001px;top:465px;width:62px;text-align:right">0<span class="d">.</span>00</div>
<div style="position:absolute;left:180px;top:480px;width:13px;height:17px;background:#bccbe3;border-top:1px solid #fff;border-left:1px solid #fff;border-right:1px solid #000;border-bottom:1px solid #000;box-shadow:inset -1px -1px 0 #7a7a7a"></div>
<div style="position:absolute;left:193px;top:480px;width:875px;height:17px;background:#ffffff"></div>
<div style="position:absolute;left:193px;top:496px;width:875px;height:1px;background:#c3c3c3"></div>
<div style="left:204px;top:482px;width:12px;height:12px;background:#fff;border-top:1px solid #858585;border-left:1px solid #858585;border-right:1px solid #e3e3e3;border-bottom:1px solid #e3e3e3;box-shadow:inset 1px 1px 0 #5a5a5a"></div>
<div class="t m" style="left:231px;top:482px">01016</div>
<div class="t" style="left:292px;top:482px;">西瓜</div>
<div class="t" style="left:373px;top:482px;">斤</div>
<div class="t m" style="left:426px;top:482px;width:72px;text-align:right">2<span class="d">.</span>50</div>
<div class="t m" style="left:502px;top:482px;width:62px;text-align:right">2<span class="d">.</span>00</div>
<div style="left:595px;top:482px;width:12px;height:12px;background:#fff;border-top:1px solid #858585;border-left:1px solid #858585;border-right:1px solid #e3e3e3;border-bottom:1px solid #e3e3e3;box-shadow:inset 1px 1px 0 #5a5a5a"></div>
<div style="left:661px;top:482px;width:12px;height:12px;background:#fff;border-top:1px solid #858585;border-left:1px solid #858585;border-right:1px solid #e3e3e3;border-bottom:1px solid #e3e3e3;box-shadow:inset 1px 1px 0 #5a5a5a"></div><svg style="position:absolute;left:661px;top:482px" width="12" height="12"><path d="M3.3 5.3L5.5 8.6L9.4 3.2" stroke="#000" stroke-width="2.1" fill="none"/></svg>
<div class="t m" style="left:700px;top:482px;width:82px;text-align:right">0</div>
<div style="left:813px;top:482px;width:12px;height:12px;background:#fff;border-top:1px solid #858585;border-left:1px solid #858585;border-right:1px solid #e3e3e3;border-bottom:1px solid #e3e3e3;box-shadow:inset 1px 1px 0 #5a5a5a"></div>
<div class="t m" style="left:852px;top:482px;width:62px;text-align:right">0<span class="d">.</span>00</div>
<div style="left:954px;top:482px;width:12px;height:12px;background:#fff;border-top:1px solid #858585;border-left:1px solid #858585;border-right:1px solid #e3e3e3;border-bottom:1px solid #e3e3e3;box-shadow:inset 1px 1px 0 #5a5a5a"></div><svg style="position:absolute;left:954px;top:482px" width="12" height="12"><path d="M3.3 5.3L5.5 8.6L9.4 3.2" stroke="#000" stroke-width="2.1" fill="none"/></svg>
<div class="t m" style="left:1001px;top:482px;width:62px;text-align:right">0<span class="d">.</span>00</div>
<div style="position:absolute;left:180px;top:497px;width:13px;height:17px;background:#bccbe3;border-top:1px solid #fff;border-left:1px solid #fff;border-right:1px solid #000;border-bottom:1px solid #000;box-shadow:inset -1px -1px 0 #7a7a7a"></div>
<div style="position:absolute;left:193px;top:497px;width:875px;height:17px;background:#ecf0f8"></div>
<div style="position:absolute;left:193px;top:513px;width:875px;height:1px;background:#c3c3c3"></div>
<div style="left:204px;top:499px;width:12px;height:12px;background:#fff;border-top:1px solid #858585;border-left:1px solid #858585;border-right:1px solid #e3e3e3;border-bottom:1px solid #e3e3e3;box-shadow:inset 1px 1px 0 #5a5a5a"></div>
<div class="t m" style="left:231px;top:499px">01017</div>
<div class="t" style="left:292px;top:499px;">香蕉</div>
<div class="t" style="left:373px;top:499px;">斤</div>
<div class="t m" style="left:426px;top:499px;width:72px;text-align:right">3<span class="d">.</span>00</div>
<div class="t m" style="left:502px;top:499px;width:62px;text-align:right">2<span class="d">.</span>50</div>
<div style="left:595px;top:499px;width:12px;height:12px;background:#fff;border-top:1px solid #858585;border-left:1px solid #858585;border-right:1px solid #e3e3e3;border-bottom:1px solid #e3e3e3;box-shadow:inset 1px 1px 0 #5a5a5a"></div>
<div style="left:661px;top:499px;width:12px;height:12px;background:#fff;border-top:1px solid #858585;border-left:1px solid #858585;border-right:1px solid #e3e3e3;border-bottom:1px solid #e3e3e3;box-shadow:inset 1px 1px 0 #5a5a5a"></div><svg style="position:absolute;left:661px;top:499px" width="12" height="12"><path d="M3.3 5.3L5.5 8.6L9.4 3.2" stroke="#000" stroke-width="2.1" fill="none"/></svg>
<div class="t m" style="left:700px;top:499px;width:82px;text-align:right">0</div>
<div style="left:813px;top:499px;width:12px;height:12px;background:#fff;border-top:1px solid #858585;border-left:1px solid #858585;border-right:1px solid #e3e3e3;border-bottom:1px solid #e3e3e3;box-shadow:inset 1px 1px 0 #5a5a5a"></div>
<div class="t m" style="left:852px;top:499px;width:62px;text-align:right">0<span class="d">.</span>00</div>
<div style="left:954px;top:499px;width:12px;height:12px;background:#fff;border-top:1px solid #858585;border-left:1px solid #858585;border-right:1px solid #e3e3e3;border-bottom:1px solid #e3e3e3;box-shadow:inset 1px 1px 0 #5a5a5a"></div><svg style="position:absolute;left:954px;top:499px" width="12" height="12"><path d="M3.3 5.3L5.5 8.6L9.4 3.2" stroke="#000" stroke-width="2.1" fill="none"/></svg>
<div class="t m" style="left:1001px;top:499px;width:62px;text-align:right">0<span class="d">.</span>00</div>
<div style="position:absolute;left:180px;top:514px;width:13px;height:17px;background:#bccbe3;border-top:1px solid #fff;border-left:1px solid #fff;border-right:1px solid #000;border-bottom:1px solid #000;box-shadow:inset -1px -1px 0 #7a7a7a"></div>
<div style="position:absolute;left:193px;top:514px;width:875px;height:17px;background:#ffffff"></div>
<div style="position:absolute;left:193px;top:530px;width:875px;height:1px;background:#c3c3c3"></div>
<div style="left:204px;top:516px;width:12px;height:12px;background:#fff;border-top:1px solid #858585;border-left:1px solid #858585;border-right:1px solid #e3e3e3;border-bottom:1px solid #e3e3e3;box-shadow:inset 1px 1px 0 #5a5a5a"></div>
<div class="t m" style="left:231px;top:516px">01018</div>
<div class="t" style="left:292px;top:516px;">柚子</div>
<div class="t" style="left:373px;top:516px;">斤</div>
<div class="t m" style="left:426px;top:516px;width:72px;text-align:right">9<span class="d">.</span>00</div>
<div class="t m" style="left:502px;top:516px;width:62px;text-align:right">8<span class="d">.</span>50</div>
<div style="left:595px;top:516px;width:12px;height:12px;background:#fff;border-top:1px solid #858585;border-left:1px solid #858585;border-right:1px solid #e3e3e3;border-bottom:1px solid #e3e3e3;box-shadow:inset 1px 1px 0 #5a5a5a"></div>
<div style="left:661px;top:516px;width:12px;height:12px;background:#fff;border-top:1px solid #858585;border-left:1px solid #858585;border-right:1px solid #e3e3e3;border-bottom:1px solid #e3e3e3;box-shadow:inset 1px 1px 0 #5a5a5a"></div><svg style="position:absolute;left:661px;top:516px" width="12" height="12"><path d="M3.3 5.3L5.5 8.6L9.4 3.2" stroke="#000" stroke-width="2.1" fill="none"/></svg>
<div class="t m" style="left:700px;top:516px;width:82px;text-align:right">0</div>
<div style="left:813px;top:516px;width:12px;height:12px;background:#fff;border-top:1px solid #858585;border-left:1px solid #858585;border-right:1px solid #e3e3e3;border-bottom:1px solid #e3e3e3;box-shadow:inset 1px 1px 0 #5a5a5a"></div>
<div class="t m" style="left:852px;top:516px;width:62px;text-align:right">0<span class="d">.</span>00</div>
<div style="left:954px;top:516px;width:12px;height:12px;background:#fff;border-top:1px solid #858585;border-left:1px solid #858585;border-right:1px solid #e3e3e3;border-bottom:1px solid #e3e3e3;box-shadow:inset 1px 1px 0 #5a5a5a"></div><svg style="position:absolute;left:954px;top:516px" width="12" height="12"><path d="M3.3 5.3L5.5 8.6L9.4 3.2" stroke="#000" stroke-width="2.1" fill="none"/></svg>
<div class="t m" style="left:1001px;top:516px;width:62px;text-align:right">0<span class="d">.</span>00</div>
<div style="position:absolute;left:180px;top:531px;width:13px;height:17px;background:#bccbe3;border-top:1px solid #fff;border-left:1px solid #fff;border-right:1px solid #000;border-bottom:1px solid #000;box-shadow:inset -1px -1px 0 #7a7a7a"></div>
<div style="position:absolute;left:193px;top:531px;width:875px;height:17px;background:#ecf0f8"></div>
<div style="position:absolute;left:193px;top:547px;width:875px;height:1px;background:#c3c3c3"></div>
<div style="left:204px;top:533px;width:12px;height:12px;background:#fff;border-top:1px solid #858585;border-left:1px solid #858585;border-right:1px solid #e3e3e3;border-bottom:1px solid #e3e3e3;box-shadow:inset 1px 1px 0 #5a5a5a"></div>
<div class="t m" style="left:231px;top:533px">01019</div>
<div class="t" style="left:292px;top:533px;">枣子</div>
<div class="t" style="left:373px;top:533px;">斤</div>
<div class="t m" style="left:426px;top:533px;width:72px;text-align:right">8<span class="d">.</span>00</div>
<div class="t m" style="left:502px;top:533px;width:62px;text-align:right">6<span class="d">.</span>00</div>
<div style="left:595px;top:533px;width:12px;height:12px;background:#fff;border-top:1px solid #858585;border-left:1px solid #858585;border-right:1px solid #e3e3e3;border-bottom:1px solid #e3e3e3;box-shadow:inset 1px 1px 0 #5a5a5a"></div>
<div style="left:661px;top:533px;width:12px;height:12px;background:#fff;border-top:1px solid #858585;border-left:1px solid #858585;border-right:1px solid #e3e3e3;border-bottom:1px solid #e3e3e3;box-shadow:inset 1px 1px 0 #5a5a5a"></div><svg style="position:absolute;left:661px;top:533px" width="12" height="12"><path d="M3.3 5.3L5.5 8.6L9.4 3.2" stroke="#000" stroke-width="2.1" fill="none"/></svg>
<div class="t m" style="left:700px;top:533px;width:82px;text-align:right">0</div>
<div style="left:813px;top:533px;width:12px;height:12px;background:#fff;border-top:1px solid #858585;border-left:1px solid #858585;border-right:1px solid #e3e3e3;border-bottom:1px solid #e3e3e3;box-shadow:inset 1px 1px 0 #5a5a5a"></div>
<div class="t m" style="left:852px;top:533px;width:62px;text-align:right">0<span class="d">.</span>00</div>
<div style="left:954px;top:533px;width:12px;height:12px;background:#fff;border-top:1px solid #858585;border-left:1px solid #858585;border-right:1px solid #e3e3e3;border-bottom:1px solid #e3e3e3;box-shadow:inset 1px 1px 0 #5a5a5a"></div><svg style="position:absolute;left:954px;top:533px" width="12" height="12"><path d="M3.3 5.3L5.5 8.6L9.4 3.2" stroke="#000" stroke-width="2.1" fill="none"/></svg>
<div class="t m" style="left:1001px;top:533px;width:62px;text-align:right">0<span class="d">.</span>00</div>
<div style="position:absolute;left:180px;top:548px;width:13px;height:17px;background:#bccbe3;border-top:1px solid #fff;border-left:1px solid #fff;border-right:1px solid #000;border-bottom:1px solid #000;box-shadow:inset -1px -1px 0 #7a7a7a"></div>
<div style="position:absolute;left:193px;top:548px;width:875px;height:17px;background:#ffffff"></div>
<div style="position:absolute;left:193px;top:564px;width:875px;height:1px;background:#c3c3c3"></div>
<div style="left:204px;top:550px;width:12px;height:12px;background:#fff;border-top:1px solid #858585;border-left:1px solid #858585;border-right:1px solid #e3e3e3;border-bottom:1px solid #e3e3e3;box-shadow:inset 1px 1px 0 #5a5a5a"></div>
<div class="t m" style="left:231px;top:550px">02001</div>
<div class="t" style="left:292px;top:550px;">百香果</div>
<div class="t" style="left:373px;top:550px;">斤</div>
<div class="t m" style="left:426px;top:550px;width:72px;text-align:right">30<span class="d">.</span>00</div>
<div class="t m" style="left:502px;top:550px;width:62px;text-align:right">25<span class="d">.</span>00</div>
<div style="left:595px;top:550px;width:12px;height:12px;background:#fff;border-top:1px solid #858585;border-left:1px solid #858585;border-right:1px solid #e3e3e3;border-bottom:1px solid #e3e3e3;box-shadow:inset 1px 1px 0 #5a5a5a"></div>
<div style="left:661px;top:550px;width:12px;height:12px;background:#fff;border-top:1px solid #858585;border-left:1px solid #858585;border-right:1px solid #e3e3e3;border-bottom:1px solid #e3e3e3;box-shadow:inset 1px 1px 0 #5a5a5a"></div><svg style="position:absolute;left:661px;top:550px" width="12" height="12"><path d="M3.3 5.3L5.5 8.6L9.4 3.2" stroke="#000" stroke-width="2.1" fill="none"/></svg>
<div class="t m" style="left:700px;top:550px;width:82px;text-align:right">0</div>
<div style="left:813px;top:550px;width:12px;height:12px;background:#fff;border-top:1px solid #858585;border-left:1px solid #858585;border-right:1px solid #e3e3e3;border-bottom:1px solid #e3e3e3;box-shadow:inset 1px 1px 0 #5a5a5a"></div>
<div class="t m" style="left:852px;top:550px;width:62px;text-align:right">0<span class="d">.</span>00</div>
<div style="left:954px;top:550px;width:12px;height:12px;background:#fff;border-top:1px solid #858585;border-left:1px solid #858585;border-right:1px solid #e3e3e3;border-bottom:1px solid #e3e3e3;box-shadow:inset 1px 1px 0 #5a5a5a"></div><svg style="position:absolute;left:954px;top:550px" width="12" height="12"><path d="M3.3 5.3L5.5 8.6L9.4 3.2" stroke="#000" stroke-width="2.1" fill="none"/></svg>
<div class="t m" style="left:1001px;top:550px;width:62px;text-align:right">0<span class="d">.</span>00</div>
<div style="position:absolute;left:180px;top:565px;width:13px;height:17px;background:#bccbe3;border-top:1px solid #fff;border-left:1px solid #fff;border-right:1px solid #000;border-bottom:1px solid #000;box-shadow:inset -1px -1px 0 #7a7a7a"></div>
<div style="position:absolute;left:193px;top:565px;width:875px;height:17px;background:#ecf0f8"></div>
<div style="position:absolute;left:193px;top:581px;width:875px;height:1px;background:#c3c3c3"></div>
<div style="left:204px;top:567px;width:12px;height:12px;background:#fff;border-top:1px solid #858585;border-left:1px solid #858585;border-right:1px solid #e3e3e3;border-bottom:1px solid #e3e3e3;box-shadow:inset 1px 1px 0 #5a5a5a"></div>
<div class="t m" style="left:231px;top:567px">02002</div>
<div class="t" style="left:292px;top:567px;">进口柑橘</div>
<div class="t" style="left:373px;top:567px;">斤</div>
<div class="t m" style="left:426px;top:567px;width:72px;text-align:right">12<span class="d">.</span>00</div>
<div class="t m" style="left:502px;top:567px;width:62px;text-align:right">10<span class="d">.</span>00</div>
<div style="left:595px;top:567px;width:12px;height:12px;background:#fff;border-top:1px solid #858585;border-left:1px solid #858585;border-right:1px solid #e3e3e3;border-bottom:1px solid #e3e3e3;box-shadow:inset 1px 1px 0 #5a5a5a"></div>
<div style="left:661px;top:567px;width:12px;height:12px;background:#fff;border-top:1px solid #858585;border-left:1px solid #858585;border-right:1px solid #e3e3e3;border-bottom:1px solid #e3e3e3;box-shadow:inset 1px 1px 0 #5a5a5a"></div><svg style="position:absolute;left:661px;top:567px" width="12" height="12"><path d="M3.3 5.3L5.5 8.6L9.4 3.2" stroke="#000" stroke-width="2.1" fill="none"/></svg>
<div class="t m" style="left:700px;top:567px;width:82px;text-align:right">0</div>
<div style="left:813px;top:567px;width:12px;height:12px;background:#fff;border-top:1px solid #858585;border-left:1px solid #858585;border-right:1px solid #e3e3e3;border-bottom:1px solid #e3e3e3;box-shadow:inset 1px 1px 0 #5a5a5a"></div>
<div class="t m" style="left:852px;top:567px;width:62px;text-align:right">0<span class="d">.</span>00</div>
<div style="left:954px;top:567px;width:12px;height:12px;background:#fff;border-top:1px solid #858585;border-left:1px solid #858585;border-right:1px solid #e3e3e3;border-bottom:1px solid #e3e3e3;box-shadow:inset 1px 1px 0 #5a5a5a"></div><svg style="position:absolute;left:954px;top:567px" width="12" height="12"><path d="M3.3 5.3L5.5 8.6L9.4 3.2" stroke="#000" stroke-width="2.1" fill="none"/></svg>
<div class="t m" style="left:1001px;top:567px;width:62px;text-align:right">0<span class="d">.</span>00</div>
<div style="position:absolute;left:180px;top:582px;width:13px;height:17px;background:#bccbe3;border-top:1px solid #fff;border-left:1px solid #fff;border-right:1px solid #000;border-bottom:1px solid #000;box-shadow:inset -1px -1px 0 #7a7a7a"></div>
<div style="position:absolute;left:193px;top:582px;width:875px;height:17px;background:#ffffff"></div>
<div style="position:absolute;left:193px;top:598px;width:875px;height:1px;background:#c3c3c3"></div>
<div style="left:204px;top:584px;width:12px;height:12px;background:#fff;border-top:1px solid #858585;border-left:1px solid #858585;border-right:1px solid #e3e3e3;border-bottom:1px solid #e3e3e3;box-shadow:inset 1px 1px 0 #5a5a5a"></div>
<div class="t m" style="left:231px;top:584px">02003</div>
<div class="t" style="left:292px;top:584px;">进口樱桃</div>
<div class="t" style="left:373px;top:584px;">斤</div>
<div class="t m" style="left:426px;top:584px;width:72px;text-align:right">30<span class="d">.</span>00</div>
<div class="t m" style="left:502px;top:584px;width:62px;text-align:right">25<span class="d">.</span>00</div>
<div style="left:595px;top:584px;width:12px;height:12px;background:#fff;border-top:1px solid #858585;border-left:1px solid #858585;border-right:1px solid #e3e3e3;border-bottom:1px solid #e3e3e3;box-shadow:inset 1px 1px 0 #5a5a5a"></div>
<div style="left:661px;top:584px;width:12px;height:12px;background:#fff;border-top:1px solid #858585;border-left:1px solid #858585;border-right:1px solid #e3e3e3;border-bottom:1px solid #e3e3e3;box-shadow:inset 1px 1px 0 #5a5a5a"></div><svg style="position:absolute;left:661px;top:584px" width="12" height="12"><path d="M3.3 5.3L5.5 8.6L9.4 3.2" stroke="#000" stroke-width="2.1" fill="none"/></svg>
<div class="t m" style="left:700px;top:584px;width:82px;text-align:right">0</div>
<div style="left:813px;top:584px;width:12px;height:12px;background:#fff;border-top:1px solid #858585;border-left:1px solid #858585;border-right:1px solid #e3e3e3;border-bottom:1px solid #e3e3e3;box-shadow:inset 1px 1px 0 #5a5a5a"></div>
<div class="t m" style="left:852px;top:584px;width:62px;text-align:right">0<span class="d">.</span>00</div>
<div style="left:954px;top:584px;width:12px;height:12px;background:#fff;border-top:1px solid #858585;border-left:1px solid #858585;border-right:1px solid #e3e3e3;border-bottom:1px solid #e3e3e3;box-shadow:inset 1px 1px 0 #5a5a5a"></div><svg style="position:absolute;left:954px;top:584px" width="12" height="12"><path d="M3.3 5.3L5.5 8.6L9.4 3.2" stroke="#000" stroke-width="2.1" fill="none"/></svg>
<div class="t m" style="left:1001px;top:584px;width:62px;text-align:right">0<span class="d">.</span>00</div>
<div style="position:absolute;left:180px;top:599px;width:13px;height:17px;background:#bccbe3;border-top:1px solid #fff;border-left:1px solid #fff;border-right:1px solid #000;border-bottom:1px solid #000;box-shadow:inset -1px -1px 0 #7a7a7a"></div>
<div style="position:absolute;left:193px;top:599px;width:875px;height:17px;background:#ecf0f8"></div>
<div style="position:absolute;left:193px;top:615px;width:875px;height:1px;background:#c3c3c3"></div>
<div style="left:204px;top:601px;width:12px;height:12px;background:#fff;border-top:1px solid #858585;border-left:1px solid #858585;border-right:1px solid #e3e3e3;border-bottom:1px solid #e3e3e3;box-shadow:inset 1px 1px 0 #5a5a5a"></div>
<div class="t m" style="left:231px;top:601px">02004</div>
<div class="t" style="left:292px;top:601px;">进口樱桃<span class="m">1</span></div>
<div class="t" style="left:373px;top:601px;">斤</div>
<div class="t m" style="left:426px;top:601px;width:72px;text-align:right">45<span class="d">.</span>00</div>
<div class="t m" style="left:502px;top:601px;width:62px;text-align:right">38<span class="d">.</span>00</div>
<div style="left:595px;top:601px;width:12px;height:12px;background:#fff;border-top:1px solid #858585;border-left:1px solid #858585;border-right:1px solid #e3e3e3;border-bottom:1px solid #e3e3e3;box-shadow:inset 1px 1px 0 #5a5a5a"></div>
<div style="left:661px;top:601px;width:12px;height:12px;background:#fff;border-top:1px solid #858585;border-left:1px solid #858585;border-right:1px solid #e3e3e3;border-bottom:1px solid #e3e3e3;box-shadow:inset 1px 1px 0 #5a5a5a"></div><svg style="position:absolute;left:661px;top:601px" width="12" height="12"><path d="M3.3 5.3L5.5 8.6L9.4 3.2" stroke="#000" stroke-width="2.1" fill="none"/></svg>
<div class="t m" style="left:700px;top:601px;width:82px;text-align:right">0</div>
<div style="left:813px;top:601px;width:12px;height:12px;background:#fff;border-top:1px solid #858585;border-left:1px solid #858585;border-right:1px solid #e3e3e3;border-bottom:1px solid #e3e3e3;box-shadow:inset 1px 1px 0 #5a5a5a"></div>
<div class="t m" style="left:852px;top:601px;width:62px;text-align:right">0<span class="d">.</span>00</div>
<div style="left:954px;top:601px;width:12px;height:12px;background:#fff;border-top:1px solid #858585;border-left:1px solid #858585;border-right:1px solid #e3e3e3;border-bottom:1px solid #e3e3e3;box-shadow:inset 1px 1px 0 #5a5a5a"></div><svg style="position:absolute;left:954px;top:601px" width="12" height="12"><path d="M3.3 5.3L5.5 8.6L9.4 3.2" stroke="#000" stroke-width="2.1" fill="none"/></svg>
<div class="t m" style="left:1001px;top:601px;width:62px;text-align:right">0<span class="d">.</span>00</div>
<div style="position:absolute;left:180px;top:616px;width:13px;height:17px;background:#bccbe3;border-top:1px solid #fff;border-left:1px solid #fff;border-right:1px solid #000;border-bottom:1px solid #000;box-shadow:inset -1px -1px 0 #7a7a7a"></div>
<div style="position:absolute;left:193px;top:616px;width:875px;height:17px;background:#ffffff"></div>
<div style="position:absolute;left:193px;top:632px;width:875px;height:1px;background:#c3c3c3"></div>
<div style="left:204px;top:618px;width:12px;height:12px;background:#fff;border-top:1px solid #858585;border-left:1px solid #858585;border-right:1px solid #e3e3e3;border-bottom:1px solid #e3e3e3;box-shadow:inset 1px 1px 0 #5a5a5a"></div>
<div class="t m" style="left:231px;top:618px">02005</div>
<div class="t" style="left:292px;top:618px;">牛油果</div>
<div class="t" style="left:373px;top:618px;">斤</div>
<div class="t m" style="left:426px;top:618px;width:72px;text-align:right">28<span class="d">.</span>00</div>
<div class="t m" style="left:502px;top:618px;width:62px;text-align:right">23<span class="d">.</span>00</div>
<div style="left:595px;top:618px;width:12px;height:12px;background:#fff;border-top:1px solid #858585;border-left:1px solid #858585;border-right:1px solid #e3e3e3;border-bottom:1px solid #e3e3e3;box-shadow:inset 1px 1px 0 #5a5a5a"></div>
<div style="left:661px;top:618px;width:12px;height:12px;background:#fff;border-top:1px solid #858585;border-left:1px solid #858585;border-right:1px solid #e3e3e3;border-bottom:1px solid #e3e3e3;box-shadow:inset 1px 1px 0 #5a5a5a"></div><svg style="position:absolute;left:661px;top:618px" width="12" height="12"><path d="M3.3 5.3L5.5 8.6L9.4 3.2" stroke="#000" stroke-width="2.1" fill="none"/></svg>
<div class="t m" style="left:700px;top:618px;width:82px;text-align:right">0</div>
<div style="left:813px;top:618px;width:12px;height:12px;background:#fff;border-top:1px solid #858585;border-left:1px solid #858585;border-right:1px solid #e3e3e3;border-bottom:1px solid #e3e3e3;box-shadow:inset 1px 1px 0 #5a5a5a"></div>
<div class="t m" style="left:852px;top:618px;width:62px;text-align:right">0<span class="d">.</span>00</div>
<div style="left:954px;top:618px;width:12px;height:12px;background:#fff;border-top:1px solid #858585;border-left:1px solid #858585;border-right:1px solid #e3e3e3;border-bottom:1px solid #e3e3e3;box-shadow:inset 1px 1px 0 #5a5a5a"></div><svg style="position:absolute;left:954px;top:618px" width="12" height="12"><path d="M3.3 5.3L5.5 8.6L9.4 3.2" stroke="#000" stroke-width="2.1" fill="none"/></svg>
<div class="t m" style="left:1001px;top:618px;width:62px;text-align:right">0<span class="d">.</span>00</div>
<div style="position:absolute;left:180px;top:633px;width:13px;height:17px;background:#bccbe3;border-top:1px solid #fff;border-left:1px solid #fff;border-right:1px solid #000;border-bottom:1px solid #000;box-shadow:inset -1px -1px 0 #7a7a7a"></div>
<div style="position:absolute;left:193px;top:633px;width:875px;height:17px;background:#ecf0f8"></div>
<div style="position:absolute;left:193px;top:649px;width:875px;height:1px;background:#c3c3c3"></div>
<div style="left:204px;top:635px;width:12px;height:12px;background:#fff;border-top:1px solid #858585;border-left:1px solid #858585;border-right:1px solid #e3e3e3;border-bottom:1px solid #e3e3e3;box-shadow:inset 1px 1px 0 #5a5a5a"></div>
<div class="t m" style="left:231px;top:635px">02006</div>
<div class="t" style="left:292px;top:635px;">进口柠檬</div>
<div class="t" style="left:373px;top:635px;">斤</div>
<div class="t m" style="left:426px;top:635px;width:72px;text-align:right">18<span class="d">.</span>00</div>
<div class="t m" style="left:502px;top:635px;width:62px;text-align:right">15<span class="d">.</span>00</div>
<div style="left:595px;top:635px;width:12px;height:12px;background:#fff;border-top:1px solid #858585;border-left:1px solid #858585;border-right:1px solid #e3e3e3;border-bottom:1px solid #e3e3e3;box-shadow:inset 1px 1px 0 #5a5a5a"></div>
<div style="left:661px;top:635px;width:12px;height:12px;background:#fff;border-top:1px solid #858585;border-left:1px solid #858585;border-right:1px solid #e3e3e3;border-bottom:1px solid #e3e3e3;box-shadow:inset 1px 1px 0 #5a5a5a"></div><svg style="position:absolute;left:661px;top:635px" width="12" height="12"><path d="M3.3 5.3L5.5 8.6L9.4 3.2" stroke="#000" stroke-width="2.1" fill="none"/></svg>
<div class="t m" style="left:700px;top:635px;width:82px;text-align:right">0</div>
<div style="left:813px;top:635px;width:12px;height:12px;background:#fff;border-top:1px solid #858585;border-left:1px solid #858585;border-right:1px solid #e3e3e3;border-bottom:1px solid #e3e3e3;box-shadow:inset 1px 1px 0 #5a5a5a"></div>
<div class="t m" style="left:852px;top:635px;width:62px;text-align:right">0<span class="d">.</span>00</div>
<div style="left:954px;top:635px;width:12px;height:12px;background:#fff;border-top:1px solid #858585;border-left:1px solid #858585;border-right:1px solid #e3e3e3;border-bottom:1px solid #e3e3e3;box-shadow:inset 1px 1px 0 #5a5a5a"></div><svg style="position:absolute;left:954px;top:635px" width="12" height="12"><path d="M3.3 5.3L5.5 8.6L9.4 3.2" stroke="#000" stroke-width="2.1" fill="none"/></svg>
<div class="t m" style="left:1001px;top:635px;width:62px;text-align:right">0<span class="d">.</span>00</div>
<div style="position:absolute;left:180px;top:650px;width:13px;height:17px;background:#bccbe3;border-top:1px solid #fff;border-left:1px solid #fff;border-right:1px solid #000;border-bottom:1px solid #000;box-shadow:inset -1px -1px 0 #7a7a7a"></div>
<div style="position:absolute;left:193px;top:650px;width:875px;height:17px;background:#ffffff"></div>
<div style="position:absolute;left:193px;top:666px;width:875px;height:1px;background:#c3c3c3"></div>
<div style="left:204px;top:652px;width:12px;height:12px;background:#fff;border-top:1px solid #858585;border-left:1px solid #858585;border-right:1px solid #e3e3e3;border-bottom:1px solid #e3e3e3;box-shadow:inset 1px 1px 0 #5a5a5a"></div>
<div class="t m" style="left:231px;top:652px">03001</div>
<div class="t" style="left:292px;top:652px;">西瓜<span class="m">2</span></div>
<div class="t" style="left:373px;top:652px;">斤</div>
<div class="t m" style="left:426px;top:652px;width:72px;text-align:right">1<span class="d">.</span>50</div>
<div class="t m" style="left:502px;top:652px;width:62px;text-align:right">1<span class="d">.</span>20</div>
<div style="left:595px;top:652px;width:12px;height:12px;background:#fff;border-top:1px solid #858585;border-left:1px solid #858585;border-right:1px solid #e3e3e3;border-bottom:1px solid #e3e3e3;box-shadow:inset 1px 1px 0 #5a5a5a"></div>
<div style="left:661px;top:652px;width:12px;height:12px;background:#fff;border-top:1px solid #858585;border-left:1px solid #858585;border-right:1px solid #e3e3e3;border-bottom:1px solid #e3e3e3;box-shadow:inset 1px 1px 0 #5a5a5a"></div><svg style="position:absolute;left:661px;top:652px" width="12" height="12"><path d="M3.3 5.3L5.5 8.6L9.4 3.2" stroke="#000" stroke-width="2.1" fill="none"/></svg>
<div class="t m" style="left:700px;top:652px;width:82px;text-align:right">0</div>
<div style="left:813px;top:652px;width:12px;height:12px;background:#fff;border-top:1px solid #858585;border-left:1px solid #858585;border-right:1px solid #e3e3e3;border-bottom:1px solid #e3e3e3;box-shadow:inset 1px 1px 0 #5a5a5a"></div>
<div style="left:954px;top:652px;width:12px;height:12px;background:#fff;border-top:1px solid #858585;border-left:1px solid #858585;border-right:1px solid #e3e3e3;border-bottom:1px solid #e3e3e3;box-shadow:inset 1px 1px 0 #5a5a5a"></div><svg style="position:absolute;left:954px;top:652px" width="12" height="12"><path d="M3.3 5.3L5.5 8.6L9.4 3.2" stroke="#000" stroke-width="2.1" fill="none"/></svg>
<div class="t m" style="left:1001px;top:652px;width:62px;text-align:right">0<span class="d">.</span>00</div>
<div style="position:absolute;left:180px;top:667px;width:13px;height:17px;background:#bccbe3;border-top:1px solid #fff;border-left:1px solid #fff;border-right:1px solid #000;border-bottom:1px solid #000;box-shadow:inset -1px -1px 0 #7a7a7a"></div>
<div style="position:absolute;left:193px;top:667px;width:875px;height:17px;background:#ecf0f8"></div>
<div style="position:absolute;left:193px;top:683px;width:875px;height:1px;background:#c3c3c3"></div>
<div style="left:204px;top:669px;width:12px;height:12px;background:#fff;border-top:1px solid #858585;border-left:1px solid #858585;border-right:1px solid #e3e3e3;border-bottom:1px solid #e3e3e3;box-shadow:inset 1px 1px 0 #5a5a5a"></div>
<div class="t m" style="left:231px;top:669px">04001</div>
<div class="t" style="left:292px;top:669px;">法式蒸蛋糕</div>
<div class="t" style="left:373px;top:669px;">个</div>
<div class="t m" style="left:426px;top:669px;width:72px;text-align:right">6<span class="d">.</span>00</div>
<div class="t m" style="left:502px;top:669px;width:62px;text-align:right">5<span class="d">.</span>00</div>
<div style="left:595px;top:669px;width:12px;height:12px;background:#fff;border-top:1px solid #858585;border-left:1px solid #858585;border-right:1px solid #e3e3e3;border-bottom:1px solid #e3e3e3;box-shadow:inset 1px 1px 0 #5a5a5a"></div>
<div style="left:661px;top:669px;width:12px;height:12px;background:#fff;border-top:1px solid #858585;border-left:1px solid #858585;border-right:1px solid #e3e3e3;border-bottom:1px solid #e3e3e3;box-shadow:inset 1px 1px 0 #5a5a5a"></div><svg style="position:absolute;left:661px;top:669px" width="12" height="12"><path d="M3.3 5.3L5.5 8.6L9.4 3.2" stroke="#000" stroke-width="2.1" fill="none"/></svg>
<div class="t m" style="left:700px;top:669px;width:82px;text-align:right">0</div>
<div style="left:813px;top:669px;width:12px;height:12px;background:#fff;border-top:1px solid #858585;border-left:1px solid #858585;border-right:1px solid #e3e3e3;border-bottom:1px solid #e3e3e3;box-shadow:inset 1px 1px 0 #5a5a5a"></div>
<div class="t m" style="left:852px;top:669px;width:62px;text-align:right">0<span class="d">.</span>00</div>
<div style="left:954px;top:669px;width:12px;height:12px;background:#fff;border-top:1px solid #858585;border-left:1px solid #858585;border-right:1px solid #e3e3e3;border-bottom:1px solid #e3e3e3;box-shadow:inset 1px 1px 0 #5a5a5a"></div><svg style="position:absolute;left:954px;top:669px" width="12" height="12"><path d="M3.3 5.3L5.5 8.6L9.4 3.2" stroke="#000" stroke-width="2.1" fill="none"/></svg>
<div class="t m" style="left:1001px;top:669px;width:62px;text-align:right">0<span class="d">.</span>00</div>
<div style="position:absolute;left:228px;top:225px;width:1px;height:481px;background:#c3c3c3"></div>
<div style="position:absolute;left:289px;top:225px;width:1px;height:481px;background:#c3c3c3"></div>
<div style="position:absolute;left:370px;top:225px;width:1px;height:481px;background:#c3c3c3"></div>
<div style="position:absolute;left:426px;top:225px;width:1px;height:481px;background:#c3c3c3"></div>
<div style="position:absolute;left:502px;top:225px;width:1px;height:481px;background:#c3c3c3"></div>
<div style="position:absolute;left:568px;top:225px;width:1px;height:481px;background:#c3c3c3"></div>
<div style="position:absolute;left:634px;top:225px;width:1px;height:481px;background:#c3c3c3"></div>
<div style="position:absolute;left:700px;top:225px;width:1px;height:481px;background:#c3c3c3"></div>
<div style="position:absolute;left:786px;top:225px;width:1px;height:481px;background:#c3c3c3"></div>
<div style="position:absolute;left:852px;top:225px;width:1px;height:481px;background:#c3c3c3"></div>
<div style="position:absolute;left:918px;top:225px;width:1px;height:481px;background:#c3c3c3"></div>
<div style="position:absolute;left:1001px;top:225px;width:1px;height:481px;background:#c3c3c3"></div>
<div style="position:absolute;left:1067px;top:225px;width:1px;height:481px;background:#c3c3c3"></div>
<div style="position:absolute;left:180px;top:684px;width:13px;height:5px;background:#fff;border-bottom:1px solid #000;border-right:1px solid #000"></div>
<div style="position:absolute;left:193px;top:684px;width:875px;height:4px;background:#ecf0f8"></div>
<div style="position:absolute;left:193px;top:688px;width:875px;height:1px;background:#c3c3c3"></div>
<div style="position:absolute;left:180px;top:689px;width:13px;height:17px;background:#bccbe3;border-top:1px solid #fff;border-left:1px solid #fff;border-right:1px solid #000;border-bottom:1px solid #000;box-shadow:inset -1px -1px 0 #7a7a7a"></div>
<div style="position:absolute;left:193px;top:689px;width:875px;height:17px;background:#d7e3f0"></div>
<div style="position:absolute;left:228px;top:689px;width:1px;height:17px;background:#c3c3c3"></div>
<div style="position:absolute;left:289px;top:689px;width:1px;height:17px;background:#c3c3c3"></div>
<div style="position:absolute;left:370px;top:689px;width:1px;height:17px;background:#c3c3c3"></div>
<div style="position:absolute;left:426px;top:689px;width:1px;height:17px;background:#c3c3c3"></div>
<div style="position:absolute;left:502px;top:689px;width:1px;height:17px;background:#c3c3c3"></div>
<div style="position:absolute;left:568px;top:689px;width:1px;height:17px;background:#c3c3c3"></div>
<div style="position:absolute;left:634px;top:689px;width:1px;height:17px;background:#c3c3c3"></div>
<div style="position:absolute;left:700px;top:689px;width:1px;height:17px;background:#c3c3c3"></div>
<div style="position:absolute;left:786px;top:689px;width:1px;height:17px;background:#c3c3c3"></div>
<div style="position:absolute;left:852px;top:689px;width:1px;height:17px;background:#c3c3c3"></div>
<div style="position:absolute;left:918px;top:689px;width:1px;height:17px;background:#c3c3c3"></div>
<div style="position:absolute;left:1001px;top:689px;width:1px;height:17px;background:#c3c3c3"></div>
<div style="position:absolute;left:1067px;top:689px;width:1px;height:17px;background:#c3c3c3"></div>
<div class="t" style="left:195px;top:691px;color:#1a1a9a">合计</div>
<div class="t m" style="left:253px;top:691px;color:#1a1a9a">36</div>
<div style="position:absolute;left:179px;top:706px;width:1228px;height:2px;background:#f5f5f5"></div>
<div style="position:absolute;left:1406px;top:208px;width:1px;height:498px;background:#fff"></div>
<div style="position:absolute;left:1407px;top:208px;width:17px;height:498px;background:#f0f0f0"></div>
<div style="position:absolute;left:1407px;top:225px;width:15px;height:202px;background:#cdcdcd"></div>
<svg style="position:absolute;left:1409px;top:212px" width="10" height="10"><path d="M1.5 6.5L5 3L8.5 6.5" stroke="#505050" stroke-width="1.6" fill="none"/></svg>
<svg style="position:absolute;left:1409px;top:692px" width="10" height="10"><path d="M1.5 3.5L5 7L8.5 3.5" stroke="#505050" stroke-width="1.6" fill="none"/></svg>
<div style="position:absolute;left:0px;top:206px;width:1424px;height:1px;background:#a0a0a0"></div>
<div style="position:absolute;left:2px;top:207px;width:1422px;height:1px;background:#6a6a6a"></div>
<div style="position:absolute;left:0px;top:708px;width:1426px;height:21px;background:#bccbe3"></div>
<div style="position:absolute;left:1px;top:710px;width:50px;height:19px;background:#bccbe3;border-top:1px solid #8e8e8e;border-right:1px solid #fff;border-bottom:1px solid #fff"></div>
<div class="t" style="left:14px;top:714px;">提示</div>
<div style="position:absolute;left:53px;top:710px;width:1371px;height:19px;background:#bccbe3;border-top:1px solid #8e8e8e;border-left:1px solid #8e8e8e;border-bottom:1px solid #fff"></div>
<div class="t" style="left:55px;top:714px;">就绪...</div>
<div style="position:absolute;left:0px;top:729px;width:1426px;height:22px;background:#fff"></div>
<div style="position:absolute;left:0px;top:730px;width:1426px;height:21px;background:#eef2f8"></div>
<div style="position:absolute;left:1px;top:731px;width:44px;height:19px;background:#e9eef8;border-top:1px solid #8e8e8e;border-left:1px solid #8e8e8e;border-right:1px solid #fff"></div>
<div style="position:absolute;left:48px;top:731px;width:67px;height:19px;background:#e9eef8;border-top:1px solid #8e8e8e;border-left:1px solid #8e8e8e;border-right:1px solid #fff"></div>
<div style="position:absolute;left:119px;top:731px;width:197px;height:19px;background:#e9eef8;border-top:1px solid #8e8e8e;border-left:1px solid #8e8e8e;border-right:1px solid #fff"></div>
<div style="position:absolute;left:319px;top:731px;width:57px;height:19px;background:#e9eef8;border-top:1px solid #8e8e8e;border-left:1px solid #8e8e8e;border-right:1px solid #fff"></div>
<div style="position:absolute;left:379px;top:731px;width:217px;height:19px;background:#e9eef8;border-top:1px solid #8e8e8e;border-left:1px solid #8e8e8e;border-right:1px solid #fff"></div>
<div style="position:absolute;left:600px;top:731px;width:76px;height:19px;background:#e9eef8;border-top:1px solid #8e8e8e;border-left:1px solid #8e8e8e;border-right:1px solid #fff"></div>
<div style="position:absolute;left:679px;top:731px;width:142px;height:19px;background:#e9eef8;border-top:1px solid #8e8e8e;border-left:1px solid #8e8e8e;border-right:1px solid #fff"></div>
<div style="position:absolute;left:824px;top:731px;width:58px;height:19px;background:#e9eef8;border-top:1px solid #8e8e8e;border-left:1px solid #8e8e8e;border-right:1px solid #fff"></div>
<div style="position:absolute;left:884px;top:731px;width:57px;height:19px;background:#e9eef8;border-top:1px solid #8e8e8e;border-left:1px solid #8e8e8e;border-right:1px solid #fff"></div>
<div style="position:absolute;left:944px;top:731px;width:82px;height:19px;background:#e9eef8;border-top:1px solid #8e8e8e;border-left:1px solid #8e8e8e;border-right:1px solid #fff"></div>
<div style="position:absolute;left:1029px;top:731px;width:147px;height:19px;background:#e9eef8;border-top:1px solid #8e8e8e;border-left:1px solid #8e8e8e;border-right:1px solid #fff"></div>
<div style="position:absolute;left:1179px;top:731px;width:245px;height:19px;background:#e9eef8;border-top:1px solid #8e8e8e;border-left:1px solid #8e8e8e;border-right:1px solid #fff"></div>
<div class="t" style="left:5px;top:736px;font-family:Liberation Mono;font-size:11px;letter-spacing:-0.6px;-webkit-text-stroke:0">ACCESS</div>
<div class="t" style="left:52px;top:735px;">超级管理员</div>
<div class="t" style="left:157px;top:735px;"><span class="d" style="text-align:center">[</span>本地默认数据库文件<span class="d" style="text-align:center">]</span></div>
<div class="t" style="left:324px;top:735px;">系统日期</div>
<div class="t" style="left:398px;top:736px;font-size:10.8px">2019<span class="d" style="text-align:center">-</span>12<span class="d" style="text-align:center">-</span>21<span class="d" style="text-align:center"> </span><span class="d" style="text-align:center"> </span>15<span class="d" style="text-align:center">:</span>36<span class="d" style="text-align:center">:</span>04</div>
<div class="t" style="left:542px;top:735px;">星期六</div>
<div class="t" style="left:614px;top:735px;">管理员组</div>
<div class="t" style="left:738px;top:735px;">全部</div>
<div class="t" style="left:889px;top:735px;">综合管理</div>
<svg style="position:absolute;left:1410px;top:737px" width="14" height="14"><path d="M13 2L2 13M13 6L6 13M13 10L10 13" stroke="#a0a0a0" stroke-width="1.2"/></svg>
<svg style="position:absolute;left:0;top:0" width="70" height="70"><defs><clipPath id="wca"><circle cx="28.5" cy="33.8" r="27.6"/></clipPath>
<mask id="wmaska" maskUnits="userSpaceOnUse" x="0" y="0" width="70" height="70">
 <rect x="0" y="0" width="70" height="70" fill="#000"/>
 <path d="M4.5 36Q8 28 13 23H23.5V42L12 42.5Q7 42 4 40Z" fill="#fff"/>
 <path d="M0 43.5Q14 45 33 42.5L43 37L57 29V51H0Z" fill="#fff"/>
 <path d="M33 21H42.5V37L33 42Z" fill="#fff"/>
 <path d="M49.5 18Q53 28 43 36L33 42V44L60 44V18Z" fill="#fff"/>
 
</mask></defs><g clip-path="url(#wca)">
  <rect x="0" y="51" width="14" height="20" fill="#b77a3e"/>
  <rect x="14" y="51" width="9.5" height="20" fill="#b9c8da"/>
  <rect x="23.5" y="51" width="9.5" height="20" fill="#b77a3e"/>
  <rect x="33" y="51" width="9.5" height="20" fill="#b9c8da"/>
  <rect x="42.5" y="51" width="14" height="20" fill="#b77a3e"/>
  <rect x="0" y="0" width="60" height="51" fill="#fff" opacity="0.6" mask="url(#wmaska)"/>
 </g></svg><svg style="position:absolute;left:0;top:0;mix-blend-mode:multiply" width="210" height="70"><defs><clipPath id="wcb"><circle cx="28.5" cy="33.8" r="27.6"/></clipPath>
<mask id="wmaskb" maskUnits="userSpaceOnUse" x="0" y="0" width="70" height="70">
 <rect x="0" y="0" width="70" height="70" fill="#fff"/>
 <path d="M4.5 36Q8 28 13 23H23.5V42L12 42.5Q7 42 4 40Z" fill="#000"/>
 <path d="M0 43.5Q14 45 33 42.5L43 37L57 29V51H0Z" fill="#000"/>
 <path d="M33 21H42.5V37L33 42Z" fill="#000"/>
 <path d="M49.5 18Q53 28 43 36L33 42V44L60 44V18Z" fill="#000"/>
 <path d="M0 46C10 51.5 28 51.5 40 47C48 43 54 36 57 28V51H0Z" fill="#000"/><rect x="0" y="51" width="70" height="20" fill="#000"/>
</mask></defs><g clip-path="url(#wcb)">
  <rect x="0" y="0" width="60" height="51" fill="#5aa8dc" mask="url(#wmaskb)"/>
  <path d="M0 46C10 51.5 28 51.5 40 47C48 43 54 36 57 28V51H0Z" fill="#f0a650"/>
 </g>
<text x="60" y="34" font-family="Liberation Serif" font-weight="900" font-size="27" fill="#4aa6f2" stroke="#4aa6f2" stroke-width="1.4" textLength="135" lengthAdjust="spacingAndGlyphs">河东软件园</text>
</svg><svg style="position:absolute;left:0;top:0" width="210" height="70"><path d="M1.8 37Q5.5 29 12.5 23.5" stroke="#fff" stroke-width="1.2" fill="none" opacity="0.85"/>
<text x="61" y="58" font-family="Liberation Serif" font-weight="bold" font-size="19.5" fill="#3a9a40" stroke="#3a9a40" stroke-width="0.3" opacity="0.8" textLength="134" lengthAdjust="spacingAndGlyphs">www.pc0359.cn</text>
</svg>
<svg style="position:absolute;left:9px;top:7px" width="16" height="16" shape-rendering="crispEdges">
<rect x="0" y="0" width="15" height="15" fill="#1a70c8"/><rect x="0" y="0" width="5" height="7" fill="#f06010"/>
<circle cx="7" cy="6" r="4.5" fill="#606870" shape-rendering="auto"/><circle cx="7" cy="6" r="2" fill="#50a0d8" shape-rendering="auto"/>
<path d="M3 10L1 14H7Z" fill="#606870" shape-rendering="auto"/><circle cx="10" cy="12" r="1.3" fill="#fff"/>
</svg>
<svg style="position:absolute;left:5px;top:33px" width="16" height="16" shape-rendering="crispEdges">
<rect x="0" y="0" width="15" height="15" fill="#a8c8e8" opacity="0.7"/><rect x="0" y="0" width="5" height="7" fill="#707880" opacity="0.7"/>
<circle cx="7" cy="6" r="4.5" fill="#606870" shape-rendering="auto"/><circle cx="7" cy="6" r="2" fill="#50a0d8" shape-rendering="auto"/>
</svg>
<div style="position:absolute;left:0px;top:0px;width:1426px;height:1px;background:#1883d7"></div>
<div style="position:absolute;left:0px;top:751px;width:1426px;height:1px;background:#1883d7"></div>
<div style="position:absolute;left:0px;top:0px;width:1px;height:752px;background:#1883d7"></div>
<div style="position:absolute;left:1425px;top:0px;width:1px;height:752px;background:#1883d7"></div>
</body></html>
